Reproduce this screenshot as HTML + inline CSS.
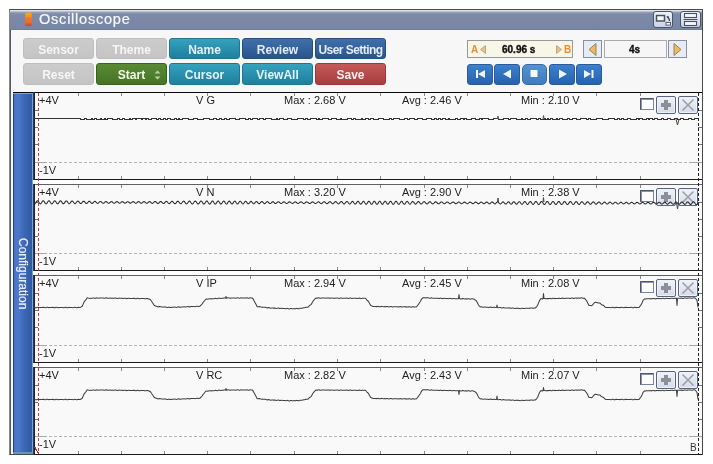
<!DOCTYPE html>
<html><head><meta charset="utf-8"><style>
*{margin:0;padding:0;box-sizing:border-box}
div{will-change:transform}
html,body{width:713px;height:464px;background:#fff;overflow:hidden;position:relative;font-family:'Liberation Sans',sans-serif;}
.frame{position:absolute;left:9px;top:9px;width:694px;height:446px;border:1px solid #4a4a4a;border-left-color:#888;background:#f7f7f7;box-shadow:inset 1px 0 0 #505868}
.title{position:absolute;left:10px;top:10px;width:692px;height:20px;background:linear-gradient(#dfe3ec 0,#dfe3ec 1px,#b8c0d2 1px,#b8c0d2 2px,#95a0b8 2px,#95a0b8 3px,#8592ae 3px,#8592ae 4px,#7d8ba9 4px,#7886a4 19px,#6f7c9a 19px)}
.ttext{position:absolute;left:39px;top:11px;font-size:14px;line-height:16px;letter-spacing:0.72px;color:#f4f6fa;-webkit-text-stroke:0.2px #f4f6fa;transform:scaleX(1.04);transform-origin:0 0;will-change:transform}
.b{position:absolute;border:1px solid;border-radius:3px;font-size:12px;font-weight:bold;text-align:center;line-height:23px;white-space:nowrap;will-change:transform}
.t{position:absolute;font-size:11px;color:#222;line-height:12px;white-space:pre;will-change:transform}
.cb{position:absolute;width:14px;height:12px;border:1px solid #4e5674;border-right-color:#7a84a0;border-bottom-color:#7a84a0;background:#fcfcfc;box-shadow:inset 1px 1px 0 #8a92ac}
.ib{position:absolute;width:20px;height:18px;border:1px solid #5a6480;border-radius:2px;background:linear-gradient(#f0f3f8,#d6dce8);box-shadow:inset 0 0 0 1px #eef2f8}
.side{position:absolute;left:13px;top:93px;width:20px;height:361px;background:linear-gradient(90deg,#22428a 0,#22428a 5%,#4a70c4 5%,#4c7acc 25%,#3e68b8 55%,#2e5a9e 95%,#78a0d4 95%,#78a0d4 100%);box-shadow:inset 0 -2px 0 #6a90c8,inset 0 1px 0 #80a6da}
.side span{position:absolute;left:3px;top:145px;will-change:transform;writing-mode:vertical-rl;font-size:12px;line-height:14px;-webkit-text-stroke:0.2px #e8eef8;color:#e8eef8}
.chart{position:absolute;left:34px;top:92px;width:668px;height:362px;background:#f9f9f9}
.tb{position:absolute;top:11px;height:17px;border:1px solid #4a5468;border-radius:3px;background:linear-gradient(#eef2fa,#c8d2e4)}
</style></head><body>
<div class="frame"></div>
<div class="title"></div>
<svg style="position:absolute;left:24px;top:12px" width="9" height="15" viewBox="0 0 9 15"><defs><linearGradient id="ig" x1="0" y1="0" x2="0" y2="1"><stop offset="0" stop-color="#f2a424"/><stop offset="0.3" stop-color="#f09a22"/><stop offset="0.4" stop-color="#f07a26"/><stop offset="0.75" stop-color="#ec6a28"/><stop offset="1" stop-color="#b84a38"/></linearGradient></defs><rect x="1.2" y="0.3" width="6.6" height="13.6" rx="1.6" fill="url(#ig)"/></svg>
<div class="ttext">Oscilloscope</div>
<div class="tb" style="left:653px;width:20px"><svg style="position:absolute;left:-1px;top:-1px" width="20" height="17" viewBox="0 0 20 17"><rect x="3.5" y="4.5" width="8" height="5.5" fill="#f4f6fa" stroke="#4a5060" stroke-width="1.5"/><path d="M13.5 5 L16 5.5 L14.5 7.5Z" fill="#3a4256"/><path d="M14.8 6 Q16.5 8 16.5 10" stroke="#3a4256" stroke-width="1.2" fill="none"/><rect x="13" y="11.5" width="4.5" height="2.6" fill="#f8faff" stroke="#5a6070" stroke-width="1"/></svg></div>
<div class="tb" style="left:680px;width:21px"><svg style="position:absolute;left:-1px;top:-2px" width="21" height="17" viewBox="0 0 21 17"><rect x="4.5" y="3.5" width="12" height="4" fill="#f4f6fa" stroke="#4a5060" stroke-width="1.1"/><path d="M3.5 9.5 H17.5" stroke="#4a5060" stroke-width="1"/><rect x="4.5" y="11.5" width="12" height="4" fill="#f4f6fa" stroke="#4a5060" stroke-width="1.1"/></svg></div>
<div class="b" style="left:23px;top:38px;width:71px;height:21px;background:linear-gradient(#cccccc,#c4c4c4);border-color:#bebebe;color:#f6f6f6">Sensor</div>
<div class="b" style="left:96px;top:38px;width:71px;height:21px;background:linear-gradient(#cccccc,#c4c4c4);border-color:#bebebe;color:#f6f6f6">Theme</div>
<div class="b" style="left:169px;top:38px;width:71px;height:21px;background:linear-gradient(#36a2be,#2a92b0 45%,#20809c);border-color:#1e7690;color:#e2f2f8">Name</div>
<div class="b" style="left:242px;top:38px;width:71px;height:21px;background:linear-gradient(#416fa6,#3564a0 45%,#2a5488);border-color:#284e80;color:#e4ecf6">Review</div>
<div class="b" style="left:315px;top:38px;width:71px;height:21px;background:linear-gradient(#416fa6,#3564a0 45%,#2a5488);border-color:#284e80;color:#e4ecf6;letter-spacing:-0.55px">User Setting</div>
<div class="b" style="left:23px;top:63px;width:71px;height:22px;background:linear-gradient(#cccccc,#c4c4c4);border-color:#bebebe;color:#f6f6f6">Reset</div>
<div class="b" style="left:96px;top:63px;width:71px;height:22px;background:linear-gradient(#5a8a33,#457524);border-color:#3a621c;color:#f2f8ea">Start<svg style="position:absolute;left:57px;top:6px" width="7" height="10" viewBox="0 0 7 10"><path d="M3.5 0.5 L6.5 3.5 L0.5 3.5Z M0.5 6.5 L6.5 6.5 L3.5 9.5Z" fill="#b9cfa4"/></svg></div>
<div class="b" style="left:169px;top:63px;width:71px;height:22px;background:linear-gradient(#36a2be,#2a92b0 45%,#20809c);border-color:#1e7690;color:#e2f2f8">Cursor</div>
<div class="b" style="left:242px;top:63px;width:71px;height:22px;background:linear-gradient(#36a2be,#2a92b0 45%,#20809c);border-color:#1e7690;color:#e2f2f8">ViewAll</div>
<div class="b" style="left:315px;top:63px;width:71px;height:22px;background:linear-gradient(#c45a5a,#a83d3d);border-color:#9a3838;color:#fbeeee">Save</div>
<div style="position:absolute;left:467px;top:64px;width:26px;height:21px;background:linear-gradient(#3d80cc,#2562b0);border:1px solid #2a5a9a;border-radius:3px"><svg style="position:absolute;left:-1px;top:-2px" width="26" height="22" viewBox="0 0 26 22"><rect x="9" y="7" width="2" height="8" fill="#eef6ff"/><path d="M11 11 L18 7 L18 15 Z" fill="#eef6ff"/></svg></div>
<div style="position:absolute;left:494px;top:64px;width:26px;height:21px;background:linear-gradient(#3d80cc,#2562b0);border:1px solid #2a5a9a;border-radius:3px"><svg style="position:absolute;left:-1px;top:-2px" width="26" height="22" viewBox="0 0 26 22"><path d="M9 11 L17 6.5 L17 15.5 Z" fill="#eef6ff"/></svg></div>
<div style="position:absolute;left:522px;top:64px;width:25px;height:21px;background:linear-gradient(#5592cf,#3f7bbf);border:1px solid #3a6aa0;border-radius:5px"><svg style="position:absolute;left:-1px;top:-2px" width="25" height="22" viewBox="0 0 25 22"><rect x="8.5" y="7" width="7" height="7" fill="#f4f8ff"/></svg></div>
<div style="position:absolute;left:549px;top:64px;width:26px;height:21px;background:linear-gradient(#3d80cc,#2562b0);border:1px solid #2a5a9a;border-radius:3px"><svg style="position:absolute;left:-1px;top:-2px" width="26" height="22" viewBox="0 0 26 22"><path d="M10 6.5 L18 11 L10 15.5 Z" fill="#eef6ff"/></svg></div>
<div style="position:absolute;left:576px;top:64px;width:26px;height:21px;background:linear-gradient(#3d80cc,#2562b0);border:1px solid #2a5a9a;border-radius:3px"><svg style="position:absolute;left:-1px;top:-2px" width="26" height="22" viewBox="0 0 26 22"><path d="M8 7 L15 11 L8 15 Z" fill="#eef6ff"/><rect x="15.5" y="7" width="2" height="8" fill="#eef6ff"/></svg></div>
<div style="position:absolute;left:467px;top:40px;width:106px;height:18px;border:1px solid #999;background:#f8f6e6"></div>
<div style="position:absolute;left:471px;top:44px;font-size:10px;line-height:11px;font-weight:bold;color:#f08a30;font-family:'Liberation Sans',sans-serif;">A</div>
<svg style="position:absolute;left:480px;top:45px" width="6" height="9" viewBox="0 0 6 9"><path d="M5.5 0.5 L0.5 4.5 L5.5 8.5Z" fill="#f0c080" stroke="#a0a080" stroke-width="0.8"/></svg>
<div style="position:absolute;left:502px;top:44px;font-size:10px;font-weight:bold;color:#111;-webkit-text-stroke:0.35px #111;font-family:'Liberation Sans',sans-serif;">60.96 s</div>
<svg style="position:absolute;left:556px;top:45px" width="6" height="9" viewBox="0 0 6 9"><path d="M0.5 0.5 L5.5 4.5 L0.5 8.5Z" fill="#f0c080" stroke="#a0a080" stroke-width="0.8"/></svg>
<div style="position:absolute;left:564px;top:44px;font-size:10px;line-height:11px;font-weight:bold;color:#f08a30;font-family:'Liberation Sans',sans-serif;">B</div>
<div style="position:absolute;left:583px;top:40px;width:19px;height:18px;border:1px solid #8890a0;background:#e6ecf6"></div>
<svg style="position:absolute;left:588px;top:43px" width="9" height="13" viewBox="0 0 9 13"><path d="M8 0.5 L1 6.5 L8 12.5Z" fill="#f2b860" stroke="#8a7a50" stroke-width="0.9"/></svg>
<div style="position:absolute;left:604px;top:40px;width:63px;height:18px;border:1px solid #aaa;background:#f6f6f6"></div>
<div style="position:absolute;left:603px;top:44px;width:63px;text-align:center;font-size:10px;font-weight:bold;color:#111;-webkit-text-stroke:0.35px #111;font-family:'Liberation Sans',sans-serif;">4s</div>
<div style="position:absolute;left:668px;top:40px;width:19px;height:18px;border:1px solid #8890a0;background:#e6ecf6"></div>
<svg style="position:absolute;left:673px;top:43px" width="9" height="13" viewBox="0 0 9 13"><path d="M1 0.5 L8 6.5 L1 12.5Z" fill="#f2b860" stroke="#8a7a50" stroke-width="0.9"/></svg>
<div class="side"><span>Configuration</span></div>
<div class="chart"></div>
<svg style="position:absolute;left:0;top:0" width="713" height="464" shape-rendering="crispEdges"><line x1="13" y1="92.5" x2="702" y2="92.5" stroke="#080808" stroke-width="1"/><line x1="33" y1="179.5" x2="702" y2="179.5" stroke="#1a1a1a" stroke-width="1"/><line x1="78.5" y1="93" x2="78.5" y2="96" stroke="#888" stroke-width="1"/><line x1="78.5" y1="176" x2="78.5" y2="179" stroke="#888" stroke-width="1"/><line x1="121.5" y1="93" x2="121.5" y2="96" stroke="#888" stroke-width="1"/><line x1="121.5" y1="176" x2="121.5" y2="179" stroke="#888" stroke-width="1"/><line x1="164.5" y1="93" x2="164.5" y2="96" stroke="#888" stroke-width="1"/><line x1="164.5" y1="176" x2="164.5" y2="179" stroke="#888" stroke-width="1"/><line x1="207.5" y1="93" x2="207.5" y2="96" stroke="#888" stroke-width="1"/><line x1="207.5" y1="176" x2="207.5" y2="179" stroke="#888" stroke-width="1"/><line x1="250.5" y1="93" x2="250.5" y2="96" stroke="#888" stroke-width="1"/><line x1="250.5" y1="176" x2="250.5" y2="179" stroke="#888" stroke-width="1"/><line x1="294.5" y1="93" x2="294.5" y2="96" stroke="#888" stroke-width="1"/><line x1="294.5" y1="176" x2="294.5" y2="179" stroke="#888" stroke-width="1"/><line x1="337.5" y1="93" x2="337.5" y2="96" stroke="#888" stroke-width="1"/><line x1="337.5" y1="176" x2="337.5" y2="179" stroke="#888" stroke-width="1"/><line x1="380.5" y1="93" x2="380.5" y2="96" stroke="#888" stroke-width="1"/><line x1="380.5" y1="176" x2="380.5" y2="179" stroke="#888" stroke-width="1"/><line x1="424.5" y1="93" x2="424.5" y2="96" stroke="#888" stroke-width="1"/><line x1="424.5" y1="176" x2="424.5" y2="179" stroke="#888" stroke-width="1"/><line x1="467.5" y1="93" x2="467.5" y2="96" stroke="#888" stroke-width="1"/><line x1="467.5" y1="176" x2="467.5" y2="179" stroke="#888" stroke-width="1"/><line x1="510.5" y1="93" x2="510.5" y2="96" stroke="#888" stroke-width="1"/><line x1="510.5" y1="176" x2="510.5" y2="179" stroke="#888" stroke-width="1"/><line x1="553.5" y1="93" x2="553.5" y2="96" stroke="#888" stroke-width="1"/><line x1="553.5" y1="176" x2="553.5" y2="179" stroke="#888" stroke-width="1"/><line x1="596.5" y1="93" x2="596.5" y2="96" stroke="#888" stroke-width="1"/><line x1="596.5" y1="176" x2="596.5" y2="179" stroke="#888" stroke-width="1"/><line x1="640.5" y1="93" x2="640.5" y2="96" stroke="#888" stroke-width="1"/><line x1="640.5" y1="176" x2="640.5" y2="179" stroke="#888" stroke-width="1"/><line x1="34" y1="110.5" x2="38" y2="110.5" stroke="#777" stroke-width="1"/><line x1="34" y1="127.5" x2="38" y2="127.5" stroke="#777" stroke-width="1"/><line x1="34" y1="144.5" x2="38" y2="144.5" stroke="#777" stroke-width="1"/><line x1="698" y1="110.5" x2="702" y2="110.5" stroke="#777" stroke-width="1"/><line x1="698" y1="127.5" x2="702" y2="127.5" stroke="#777" stroke-width="1"/><line x1="698" y1="144.5" x2="702" y2="144.5" stroke="#777" stroke-width="1"/><line x1="34" y1="162.5" x2="47" y2="162.5" stroke="#a8a8a8" stroke-width="1"/><line x1="49" y1="162.5" x2="688" y2="162.5" stroke="#b4b4b4" stroke-width="1" stroke-dasharray="3,2"/><line x1="689" y1="162.5" x2="702" y2="162.5" stroke="#a8a8a8" stroke-width="1"/><line x1="33" y1="184.5" x2="702" y2="184.5" stroke="#606060" stroke-width="1"/><line x1="33" y1="270.5" x2="702" y2="270.5" stroke="#1a1a1a" stroke-width="1"/><line x1="78.5" y1="185" x2="78.5" y2="188" stroke="#888" stroke-width="1"/><line x1="78.5" y1="267" x2="78.5" y2="270" stroke="#888" stroke-width="1"/><line x1="121.5" y1="185" x2="121.5" y2="188" stroke="#888" stroke-width="1"/><line x1="121.5" y1="267" x2="121.5" y2="270" stroke="#888" stroke-width="1"/><line x1="164.5" y1="185" x2="164.5" y2="188" stroke="#888" stroke-width="1"/><line x1="164.5" y1="267" x2="164.5" y2="270" stroke="#888" stroke-width="1"/><line x1="207.5" y1="185" x2="207.5" y2="188" stroke="#888" stroke-width="1"/><line x1="207.5" y1="267" x2="207.5" y2="270" stroke="#888" stroke-width="1"/><line x1="250.5" y1="185" x2="250.5" y2="188" stroke="#888" stroke-width="1"/><line x1="250.5" y1="267" x2="250.5" y2="270" stroke="#888" stroke-width="1"/><line x1="294.5" y1="185" x2="294.5" y2="188" stroke="#888" stroke-width="1"/><line x1="294.5" y1="267" x2="294.5" y2="270" stroke="#888" stroke-width="1"/><line x1="337.5" y1="185" x2="337.5" y2="188" stroke="#888" stroke-width="1"/><line x1="337.5" y1="267" x2="337.5" y2="270" stroke="#888" stroke-width="1"/><line x1="380.5" y1="185" x2="380.5" y2="188" stroke="#888" stroke-width="1"/><line x1="380.5" y1="267" x2="380.5" y2="270" stroke="#888" stroke-width="1"/><line x1="424.5" y1="185" x2="424.5" y2="188" stroke="#888" stroke-width="1"/><line x1="424.5" y1="267" x2="424.5" y2="270" stroke="#888" stroke-width="1"/><line x1="467.5" y1="185" x2="467.5" y2="188" stroke="#888" stroke-width="1"/><line x1="467.5" y1="267" x2="467.5" y2="270" stroke="#888" stroke-width="1"/><line x1="510.5" y1="185" x2="510.5" y2="188" stroke="#888" stroke-width="1"/><line x1="510.5" y1="267" x2="510.5" y2="270" stroke="#888" stroke-width="1"/><line x1="553.5" y1="185" x2="553.5" y2="188" stroke="#888" stroke-width="1"/><line x1="553.5" y1="267" x2="553.5" y2="270" stroke="#888" stroke-width="1"/><line x1="596.5" y1="185" x2="596.5" y2="188" stroke="#888" stroke-width="1"/><line x1="596.5" y1="267" x2="596.5" y2="270" stroke="#888" stroke-width="1"/><line x1="640.5" y1="185" x2="640.5" y2="188" stroke="#888" stroke-width="1"/><line x1="640.5" y1="267" x2="640.5" y2="270" stroke="#888" stroke-width="1"/><line x1="34" y1="202.5" x2="38" y2="202.5" stroke="#777" stroke-width="1"/><line x1="34" y1="219.5" x2="38" y2="219.5" stroke="#777" stroke-width="1"/><line x1="34" y1="236.5" x2="38" y2="236.5" stroke="#777" stroke-width="1"/><line x1="698" y1="202.5" x2="702" y2="202.5" stroke="#777" stroke-width="1"/><line x1="698" y1="219.5" x2="702" y2="219.5" stroke="#777" stroke-width="1"/><line x1="698" y1="236.5" x2="702" y2="236.5" stroke="#777" stroke-width="1"/><line x1="34" y1="253.5" x2="47" y2="253.5" stroke="#a8a8a8" stroke-width="1"/><line x1="49" y1="253.5" x2="688" y2="253.5" stroke="#b4b4b4" stroke-width="1" stroke-dasharray="3,2"/><line x1="689" y1="253.5" x2="702" y2="253.5" stroke="#a8a8a8" stroke-width="1"/><line x1="33" y1="275.5" x2="702" y2="275.5" stroke="#606060" stroke-width="1"/><line x1="33" y1="362.5" x2="702" y2="362.5" stroke="#1a1a1a" stroke-width="1"/><line x1="78.5" y1="276" x2="78.5" y2="279" stroke="#888" stroke-width="1"/><line x1="78.5" y1="359" x2="78.5" y2="362" stroke="#888" stroke-width="1"/><line x1="121.5" y1="276" x2="121.5" y2="279" stroke="#888" stroke-width="1"/><line x1="121.5" y1="359" x2="121.5" y2="362" stroke="#888" stroke-width="1"/><line x1="164.5" y1="276" x2="164.5" y2="279" stroke="#888" stroke-width="1"/><line x1="164.5" y1="359" x2="164.5" y2="362" stroke="#888" stroke-width="1"/><line x1="207.5" y1="276" x2="207.5" y2="279" stroke="#888" stroke-width="1"/><line x1="207.5" y1="359" x2="207.5" y2="362" stroke="#888" stroke-width="1"/><line x1="250.5" y1="276" x2="250.5" y2="279" stroke="#888" stroke-width="1"/><line x1="250.5" y1="359" x2="250.5" y2="362" stroke="#888" stroke-width="1"/><line x1="294.5" y1="276" x2="294.5" y2="279" stroke="#888" stroke-width="1"/><line x1="294.5" y1="359" x2="294.5" y2="362" stroke="#888" stroke-width="1"/><line x1="337.5" y1="276" x2="337.5" y2="279" stroke="#888" stroke-width="1"/><line x1="337.5" y1="359" x2="337.5" y2="362" stroke="#888" stroke-width="1"/><line x1="380.5" y1="276" x2="380.5" y2="279" stroke="#888" stroke-width="1"/><line x1="380.5" y1="359" x2="380.5" y2="362" stroke="#888" stroke-width="1"/><line x1="424.5" y1="276" x2="424.5" y2="279" stroke="#888" stroke-width="1"/><line x1="424.5" y1="359" x2="424.5" y2="362" stroke="#888" stroke-width="1"/><line x1="467.5" y1="276" x2="467.5" y2="279" stroke="#888" stroke-width="1"/><line x1="467.5" y1="359" x2="467.5" y2="362" stroke="#888" stroke-width="1"/><line x1="510.5" y1="276" x2="510.5" y2="279" stroke="#888" stroke-width="1"/><line x1="510.5" y1="359" x2="510.5" y2="362" stroke="#888" stroke-width="1"/><line x1="553.5" y1="276" x2="553.5" y2="279" stroke="#888" stroke-width="1"/><line x1="553.5" y1="359" x2="553.5" y2="362" stroke="#888" stroke-width="1"/><line x1="596.5" y1="276" x2="596.5" y2="279" stroke="#888" stroke-width="1"/><line x1="596.5" y1="359" x2="596.5" y2="362" stroke="#888" stroke-width="1"/><line x1="640.5" y1="276" x2="640.5" y2="279" stroke="#888" stroke-width="1"/><line x1="640.5" y1="359" x2="640.5" y2="362" stroke="#888" stroke-width="1"/><line x1="34" y1="293.5" x2="38" y2="293.5" stroke="#777" stroke-width="1"/><line x1="34" y1="310.5" x2="38" y2="310.5" stroke="#777" stroke-width="1"/><line x1="34" y1="327.5" x2="38" y2="327.5" stroke="#777" stroke-width="1"/><line x1="698" y1="293.5" x2="702" y2="293.5" stroke="#777" stroke-width="1"/><line x1="698" y1="310.5" x2="702" y2="310.5" stroke="#777" stroke-width="1"/><line x1="698" y1="327.5" x2="702" y2="327.5" stroke="#777" stroke-width="1"/><line x1="34" y1="345.5" x2="47" y2="345.5" stroke="#a8a8a8" stroke-width="1"/><line x1="49" y1="345.5" x2="688" y2="345.5" stroke="#b4b4b4" stroke-width="1" stroke-dasharray="3,2"/><line x1="689" y1="345.5" x2="702" y2="345.5" stroke="#a8a8a8" stroke-width="1"/><line x1="33" y1="367.5" x2="702" y2="367.5" stroke="#606060" stroke-width="1"/><line x1="33" y1="454.5" x2="702" y2="454.5" stroke="#1a1a1a" stroke-width="1"/><line x1="78.5" y1="368" x2="78.5" y2="371" stroke="#888" stroke-width="1"/><line x1="78.5" y1="451" x2="78.5" y2="454" stroke="#888" stroke-width="1"/><line x1="121.5" y1="368" x2="121.5" y2="371" stroke="#888" stroke-width="1"/><line x1="121.5" y1="451" x2="121.5" y2="454" stroke="#888" stroke-width="1"/><line x1="164.5" y1="368" x2="164.5" y2="371" stroke="#888" stroke-width="1"/><line x1="164.5" y1="451" x2="164.5" y2="454" stroke="#888" stroke-width="1"/><line x1="207.5" y1="368" x2="207.5" y2="371" stroke="#888" stroke-width="1"/><line x1="207.5" y1="451" x2="207.5" y2="454" stroke="#888" stroke-width="1"/><line x1="250.5" y1="368" x2="250.5" y2="371" stroke="#888" stroke-width="1"/><line x1="250.5" y1="451" x2="250.5" y2="454" stroke="#888" stroke-width="1"/><line x1="294.5" y1="368" x2="294.5" y2="371" stroke="#888" stroke-width="1"/><line x1="294.5" y1="451" x2="294.5" y2="454" stroke="#888" stroke-width="1"/><line x1="337.5" y1="368" x2="337.5" y2="371" stroke="#888" stroke-width="1"/><line x1="337.5" y1="451" x2="337.5" y2="454" stroke="#888" stroke-width="1"/><line x1="380.5" y1="368" x2="380.5" y2="371" stroke="#888" stroke-width="1"/><line x1="380.5" y1="451" x2="380.5" y2="454" stroke="#888" stroke-width="1"/><line x1="424.5" y1="368" x2="424.5" y2="371" stroke="#888" stroke-width="1"/><line x1="424.5" y1="451" x2="424.5" y2="454" stroke="#888" stroke-width="1"/><line x1="467.5" y1="368" x2="467.5" y2="371" stroke="#888" stroke-width="1"/><line x1="467.5" y1="451" x2="467.5" y2="454" stroke="#888" stroke-width="1"/><line x1="510.5" y1="368" x2="510.5" y2="371" stroke="#888" stroke-width="1"/><line x1="510.5" y1="451" x2="510.5" y2="454" stroke="#888" stroke-width="1"/><line x1="553.5" y1="368" x2="553.5" y2="371" stroke="#888" stroke-width="1"/><line x1="553.5" y1="451" x2="553.5" y2="454" stroke="#888" stroke-width="1"/><line x1="596.5" y1="368" x2="596.5" y2="371" stroke="#888" stroke-width="1"/><line x1="596.5" y1="451" x2="596.5" y2="454" stroke="#888" stroke-width="1"/><line x1="640.5" y1="368" x2="640.5" y2="371" stroke="#888" stroke-width="1"/><line x1="640.5" y1="451" x2="640.5" y2="454" stroke="#888" stroke-width="1"/><line x1="34" y1="385.5" x2="38" y2="385.5" stroke="#777" stroke-width="1"/><line x1="34" y1="402.5" x2="38" y2="402.5" stroke="#777" stroke-width="1"/><line x1="34" y1="419.5" x2="38" y2="419.5" stroke="#777" stroke-width="1"/><line x1="698" y1="385.5" x2="702" y2="385.5" stroke="#777" stroke-width="1"/><line x1="698" y1="402.5" x2="702" y2="402.5" stroke="#777" stroke-width="1"/><line x1="698" y1="419.5" x2="702" y2="419.5" stroke="#777" stroke-width="1"/><line x1="34" y1="436.5" x2="47" y2="436.5" stroke="#a8a8a8" stroke-width="1"/><line x1="49" y1="436.5" x2="688" y2="436.5" stroke="#b4b4b4" stroke-width="1" stroke-dasharray="3,2"/><line x1="689" y1="436.5" x2="702" y2="436.5" stroke="#a8a8a8" stroke-width="1"/><line x1="33.5" y1="92" x2="33.5" y2="455" stroke="#2a3a58" stroke-width="1"/><line x1="34.5" y1="92" x2="34.5" y2="455" stroke="#222" stroke-width="1"/><rect x="33" y="180" width="669" height="4" fill="#ffffff"/><rect x="33" y="271" width="669" height="4" fill="#ffffff"/><rect x="33" y="363" width="669" height="4" fill="#ffffff"/><line x1="38.5" y1="93" x2="38.5" y2="454" stroke="#b84050" stroke-width="1" stroke-dasharray="3,2"/><line x1="698.5" y1="93" x2="698.5" y2="454" stroke="#222" stroke-width="1" stroke-dasharray="3,2"/><path d="M34.5 447 L38.5 453.5" stroke="#a03030" stroke-width="1.2"/></svg>
<div class="t" style="left:39px;top:94px">+4V</div>
<div class="t" style="left:39px;top:164px">-1V</div>
<div class="t" style="left:196px;top:94px">V G</div>
<div class="t" style="left:284px;top:94px">Max : 2.68 V</div>
<div class="t" style="left:402px;top:94px">Avg : 2.46 V</div>
<div class="t" style="left:521px;top:94px">Min : 2.10 V</div>
<div class="cb" style="left:640px;top:98px"></div>
<div class="ib" style="left:656px;top:96px"><svg style="position:absolute;left:-1px;top:-1px" width="20" height="18" viewBox="0 0 20 18"><path d="M8 4h4v3h3v4h-3v3h-4v-3h-3v-4h3z" fill="#8a909a"/></svg></div>
<div class="ib" style="left:678px;top:96px"><svg style="position:absolute;left:-1px;top:-1px" width="20" height="18" viewBox="0 0 20 18"><path d="M4.5 3.5L15.5 14.5M15.5 3.5L4.5 14.5" stroke="#9aa0aa" stroke-width="1.6"/></svg></div>
<div class="t" style="left:39px;top:186px">+4V</div>
<div class="t" style="left:39px;top:255px">-1V</div>
<div class="t" style="left:196px;top:186px">V N</div>
<div class="t" style="left:284px;top:186px">Max : 3.20 V</div>
<div class="t" style="left:402px;top:186px">Avg : 2.90 V</div>
<div class="t" style="left:521px;top:186px">Min : 2.38 V</div>
<div class="cb" style="left:640px;top:190px"></div>
<div class="ib" style="left:656px;top:188px"><svg style="position:absolute;left:-1px;top:-1px" width="20" height="18" viewBox="0 0 20 18"><path d="M8 4h4v3h3v4h-3v3h-4v-3h-3v-4h3z" fill="#8a909a"/></svg></div>
<div class="ib" style="left:678px;top:188px"><svg style="position:absolute;left:-1px;top:-1px" width="20" height="18" viewBox="0 0 20 18"><path d="M4.5 3.5L15.5 14.5M15.5 3.5L4.5 14.5" stroke="#9aa0aa" stroke-width="1.6"/></svg></div>
<div class="t" style="left:39px;top:277px">+4V</div>
<div class="t" style="left:39px;top:347px">-1V</div>
<div class="t" style="left:196px;top:277px">V IP</div>
<div class="t" style="left:284px;top:277px">Max : 2.94 V</div>
<div class="t" style="left:402px;top:277px">Avg : 2.45 V</div>
<div class="t" style="left:521px;top:277px">Min : 2.08 V</div>
<div class="cb" style="left:640px;top:281px"></div>
<div class="ib" style="left:656px;top:279px"><svg style="position:absolute;left:-1px;top:-1px" width="20" height="18" viewBox="0 0 20 18"><path d="M8 4h4v3h3v4h-3v3h-4v-3h-3v-4h3z" fill="#8a909a"/></svg></div>
<div class="ib" style="left:678px;top:279px"><svg style="position:absolute;left:-1px;top:-1px" width="20" height="18" viewBox="0 0 20 18"><path d="M4.5 3.5L15.5 14.5M15.5 3.5L4.5 14.5" stroke="#9aa0aa" stroke-width="1.6"/></svg></div>
<div class="t" style="left:39px;top:369px">+4V</div>
<div class="t" style="left:39px;top:438px">-1V</div>
<div class="t" style="left:196px;top:369px">V RC</div>
<div class="t" style="left:284px;top:369px">Max : 2.82 V</div>
<div class="t" style="left:402px;top:369px">Avg : 2.43 V</div>
<div class="t" style="left:521px;top:369px">Min : 2.07 V</div>
<div class="cb" style="left:640px;top:373px"></div>
<div class="ib" style="left:656px;top:371px"><svg style="position:absolute;left:-1px;top:-1px" width="20" height="18" viewBox="0 0 20 18"><path d="M8 4h4v3h3v4h-3v3h-4v-3h-3v-4h3z" fill="#8a909a"/></svg></div>
<div class="ib" style="left:678px;top:371px"><svg style="position:absolute;left:-1px;top:-1px" width="20" height="18" viewBox="0 0 20 18"><path d="M4.5 3.5L15.5 14.5M15.5 3.5L4.5 14.5" stroke="#9aa0aa" stroke-width="1.6"/></svg></div>
<div class="t" style="left:690px;top:442px;font-size:10px;color:#333">B</div>
<svg style="position:absolute;left:0;top:0" width="713" height="464"><path d="M34 118.5 H80 V119.5 H84 V118.5 H86 V119.5 H91 V118.5 H92 V119.5 H94 V118.5 H96 V119.5 H100 V118.5 H101 V119.5 H104 V118.5 H105 V119.5 H107 V118.5 H112 V119.5 H117 V118.5 H119 V119.5 H122 V118.5 H124 V119.5 H129 V118.5 H130 V119.5 H132 V118.5 H135 V119.5 H136 V118.5 H141 V119.5 H142 V118.5 H145 V119.5 H146 V118.5 H148 V119.5 H151 V118.5 H156 V119.5 H158 V118.5 H160 V119.5 H163 V118.5 H165 V119.5 H167 V118.5 H170 V119.5 H174 V118.5 H176 V119.5 H178 V118.5 H179 V119.5 H182 V118.5 H188 V119.5 H193 V118.5 H197 V119.5 H203 V118.5 H209 V119.5 H213 V118.5 H216 V119.5 H219 V118.5 H221 V119.5 H224 V118.5 H226 V119.5 H229 V118.5 H235 V119.5 H239 V118.5 H245 V119.5 H248 V118.5 H250 V119.5 H252 V118.5 H257 V119.5 H259 V118.5 H263 V119.5 H265 V118.5 H271 V119.5 H276 V118.5 H277 V119.5 H279 V118.5 H283 V119.5 H287 V118.5 H291 V119.5 H297 V118.5 H303 V119.5 H305 V118.5 H307 V119.5 H310 V118.5 H316 V119.5 H318 V118.5 H319 V119.5 H322 V118.5 H328 V119.5 H331 V118.5 H336 V119.5 H340 V118.5 H341 V119.5 H347 V118.5 H351 V119.5 H353 V118.5 H355 V119.5 H361 V118.5 H362 V119.5 H365 V118.5 H368 V119.5 H370 V118.5 H373 V119.5 H378 V118.5 H383 V119.5 H389 V118.5 H391 V119.5 H393 V118.5 H399 V119.5 H404 V118.5 H407 V119.5 H409 V118.5 H414 V119.5 H417 V118.5 H422 V119.5 H426 V118.5 H431 V119.5 H434 V118.5 H436 V119.5 H438 V118.5 H440 V119.5 H442 V118.5 H445 V119.5 H448 V118.5 H449 V119.5 H455 V118.5 H457 V119.5 H460 V118.5 H463 V119.5 H464 V118.5 H466 V119.5 H471 V118.5 H475 V119.5 H479 V118.5 H481 V119.5 H482 V118.5 H488 V119.5 H493 V118.5 H498 V119.5 H503 V118.5 H508 V119.5 H510 V118.5 H516 V119.5 H521 V118.5 H522 V119.5 H525 V118.5 H527 V119.5 H530 V118.5 H536 V119.5 H538 V118.5 H540 V119.5 H544 V118.5 H545 V119.5 H547 V118.5 H548 V119.5 H550 V118.5 H552 V119.5 H556 V118.5 H557 V119.5 H559 V118.5 H562 V119.5 H567 V118.5 H569 V119.5 H572 V118.5 H576 V119.5 H580 V118.5 H586 V119.5 H588 V118.5 H590 V119.5 H596 V118.5 H602 V119.5 H608 V118.5 H614 V119.5 H617 V118.5 H619 V119.5 H621 V118.5 H623 V119.5 H627 V118.5 H630 V119.5 H636 V118.5 H638 V119.5 H639 V118.5 H642 V119.5 H646 V118.5 H648 V119.5 H649 V118.5 H652 V119.5 H654 V118.5 H657 V119.5 H661 V118.5 H663 V119.5 H667 V118.5 H670 V119.5 H674 V118.5 H677 V119.5 H680 V118.5 H683 V119.5 H688 V118.5 H691 V119.5 H694 V118.5 H698" fill="none" stroke="#333" stroke-width="1" shape-rendering="crispEdges"/><path d="M497.5 119 L498 116 L498.5 119 M543 119 L543.5 115.5 L544 119" fill="none" stroke="#555" stroke-width="1"/><path d="M676 119 L677.5 125 L679 119.5" fill="none" stroke="#444" stroke-width="1"/><polyline points="34.00,203.43 34.50,203.85 35.00,203.80 35.50,203.29 36.00,202.49 36.50,201.63 37.00,200.97 37.50,200.71 38.00,200.93 38.50,201.56 39.00,202.42 39.50,203.24 40.00,203.78 40.50,203.89 41.00,203.52 41.50,202.80 42.00,201.93 42.50,201.17 43.00,200.75 43.50,200.80 44.00,201.28 44.50,202.07 45.00,202.93 45.50,203.61 46.00,203.91 46.50,203.74 47.00,203.15 47.50,202.33 48.00,201.50 48.50,200.91 49.00,200.74 49.50,201.02 50.00,201.68 50.50,202.52 51.00,203.30 51.50,203.80 52.00,203.87 52.50,203.50 53.00,202.78 53.50,201.94 54.00,201.22 54.50,200.81 55.00,200.84 55.50,201.30 56.00,202.05 56.50,202.88 57.00,203.54 57.50,203.86 58.00,203.74 58.50,203.21 59.00,202.44 59.50,201.65 60.00,201.05 60.50,200.82 61.00,201.03 61.50,201.61 62.00,202.39 62.50,203.15 63.00,203.68 63.50,203.82 64.00,203.54 64.50,202.92 65.00,202.14 65.50,201.42 66.00,200.97 66.50,200.92 67.00,201.27 67.50,201.92 68.00,202.69 68.50,203.36 69.00,203.73 69.50,203.70 70.00,203.29 70.50,202.61 71.00,201.86 71.50,201.26 72.00,200.98 72.50,201.09 73.00,201.56 73.50,202.26 74.00,202.97 74.50,203.50 75.00,203.70 75.50,203.51 76.00,202.98 76.50,202.28 77.00,201.61 77.50,201.17 78.00,201.07 78.50,201.35 79.00,201.91 79.50,202.61 80.00,203.22 80.50,203.58 81.00,203.58 81.50,203.22 82.00,202.62 82.50,201.95 83.00,201.41 83.50,201.16 84.00,201.26 84.50,201.69 85.00,202.32 85.50,202.95 86.00,203.40 86.50,203.55 87.00,203.34 87.50,202.84 88.00,202.22 88.50,201.64 89.00,201.29 89.50,201.27 90.00,201.58 90.50,202.13 91.00,202.74 91.50,203.24 92.00,203.47 92.50,203.37 93.00,202.97 93.50,202.40 94.00,201.83 94.50,201.43 95.00,201.33 95.50,201.56 96.00,202.03 96.50,202.61 97.00,203.11 97.50,203.38 98.00,203.34 98.50,203.01 99.00,202.49 99.50,201.95 100.00,201.54 100.50,201.41 101.00,201.58 101.50,202.00 102.00,202.54 102.50,203.03 103.00,203.31 103.50,203.30 104.00,203.01 104.50,202.52 105.00,202.00 105.50,201.62 106.00,201.48 106.50,201.63 107.00,202.03 107.50,202.54 108.00,203.00 108.50,203.26 109.00,203.25 109.50,202.97 110.00,202.50 110.50,202.02 111.00,201.66 111.50,201.54 112.00,201.70 112.50,202.09 113.00,202.58 113.50,203.00 114.00,203.24 114.50,203.20 115.00,202.91 115.50,202.45 116.00,201.99 116.50,201.67 117.00,201.59 117.50,201.78 118.00,202.17 118.50,202.64 119.00,203.04 119.50,203.23 120.00,203.15 120.50,202.84 121.00,202.39 121.50,201.95 122.00,201.67 122.50,201.63 123.00,201.85 123.50,202.26 124.00,202.72 124.50,203.08 125.00,203.22 125.50,203.10 126.00,202.76 126.50,202.31 127.00,201.89 127.50,201.65 128.00,201.67 128.50,201.93 129.00,202.36 129.50,202.81 130.00,203.13 130.50,203.23 131.00,203.07 131.50,202.69 132.00,202.23 132.50,201.84 133.00,201.64 133.50,201.69 134.00,201.99 134.50,202.44 135.00,202.89 135.50,203.19 136.00,203.25 136.50,203.04 137.00,202.64 137.50,202.17 138.00,201.78 138.50,201.61 139.00,201.71 139.50,202.04 140.00,202.51 140.50,202.96 141.00,203.25 141.50,203.28 142.00,203.04 142.50,202.61 143.00,202.12 143.50,201.74 144.00,201.58 144.50,201.69 145.00,202.06 145.50,202.55 146.00,203.01 146.50,203.30 147.00,203.33 147.50,203.07 148.00,202.62 148.50,202.11 149.00,201.70 149.50,201.53 150.00,201.65 150.50,202.03 151.00,202.54 151.50,203.04 152.00,203.36 152.50,203.40 153.00,203.15 153.50,202.68 154.00,202.13 154.50,201.69 155.00,201.48 155.50,201.57 156.00,201.94 156.50,202.48 157.00,203.02 157.50,203.40 158.00,203.49 158.50,203.27 159.00,202.80 159.50,202.23 160.00,201.72 160.50,201.43 161.00,201.46 161.50,201.80 162.00,202.34 162.50,202.93 163.00,203.39 163.50,203.58 164.00,203.44 164.50,203.00 165.00,202.40 165.50,201.82 166.00,201.43 166.50,201.34 167.00,201.60 167.50,202.12 168.00,202.75 168.50,203.32 169.00,203.64 169.50,203.62 170.00,203.27 170.50,202.68 171.00,202.02 171.50,201.50 172.00,201.26 172.50,201.38 173.00,201.82 173.50,202.47 174.00,203.13 174.50,203.61 175.00,203.77 175.50,203.55 176.00,203.03 176.50,202.34 177.00,201.69 177.50,201.27 178.00,201.20 178.50,201.50 179.00,202.09 179.50,202.81 180.00,203.44 180.50,203.81 181.00,203.80 181.50,203.42 182.00,202.76 182.50,202.03 183.00,201.42 183.50,201.12 184.00,201.21 184.50,201.68 185.00,202.38 185.50,203.13 186.00,203.70 186.50,203.94 187.00,203.76 187.50,203.23 188.00,202.48 188.50,201.74 189.00,201.21 189.50,201.05 190.00,201.31 190.50,201.91 191.00,202.70 191.50,203.43 192.00,203.91 192.50,203.99 193.00,203.65 193.50,202.98 194.00,202.17 194.50,201.46 195.00,201.05 195.50,201.06 196.00,201.49 196.50,202.22 197.00,203.04 197.50,203.72 198.00,204.05 198.50,203.95 199.00,203.43 199.50,202.65 200.00,201.83 200.50,201.21 201.00,200.96 201.50,201.17 202.00,201.77 202.50,202.60 203.00,203.41 203.50,203.96 204.00,204.10 204.50,203.78 205.00,203.10 205.50,202.24 206.00,201.47 206.50,201.01 207.00,201.00 207.50,201.43 208.00,202.20 208.50,203.06 209.00,203.78 209.50,204.12 210.00,204.00 210.50,203.44 211.00,202.62 211.50,201.77 212.00,201.15 212.50,200.94 213.00,201.22 213.50,201.89 214.00,202.75 214.50,203.56 215.00,204.06 215.50,204.10 216.00,203.67 216.50,202.91 217.00,202.03 217.50,201.31 218.00,200.97 218.50,201.11 219.00,201.69 219.50,202.53 220.00,203.38 220.50,203.97 221.00,204.13 221.50,203.80 222.00,203.09 222.50,202.22 223.00,201.45 223.50,201.03 224.00,201.08 224.50,201.59 225.00,202.40 225.50,203.26 226.00,203.89 226.50,204.11 227.00,203.84 227.50,203.17 228.00,202.32 228.50,201.54 229.00,201.09 229.50,201.11 230.00,201.59 230.50,202.37 231.00,203.21 231.50,203.84 232.00,204.07 232.50,203.81 233.00,203.16 233.50,202.33 234.00,201.58 234.50,201.15 235.00,201.18 235.50,201.65 236.00,202.42 236.50,203.23 237.00,203.82 237.50,204.01 238.00,203.74 238.50,203.09 239.00,202.28 239.50,201.58 240.00,201.20 240.50,201.28 241.00,201.77 241.50,202.52 242.00,203.29 242.50,203.82 243.00,203.94 243.50,203.62 244.00,202.97 244.50,202.20 245.00,201.56 245.50,201.26 246.00,201.40 246.50,201.92 247.00,202.66 247.50,203.36 248.00,203.81 248.50,203.85 249.00,203.48 249.50,202.83 250.00,202.10 250.50,201.55 251.00,201.34 251.50,201.54 252.00,202.09 252.50,202.79 253.00,203.42 253.50,203.78 254.00,203.74 254.50,203.34 255.00,202.69 255.50,202.03 256.00,201.56 256.50,201.43 257.00,201.69 257.50,202.24 258.00,202.90 258.50,203.46 259.00,203.73 259.50,203.63 260.00,203.20 260.50,202.59 261.00,201.99 261.50,201.59 262.00,201.53 262.50,201.82 263.00,202.36 263.50,202.97 264.00,203.46 264.50,203.67 265.00,203.53 265.50,203.10 266.00,202.52 266.50,201.98 267.00,201.65 267.50,201.63 268.00,201.92 268.50,202.44 269.00,203.00 269.50,203.44 270.00,203.61 270.50,203.46 271.00,203.05 271.50,202.51 272.00,202.01 272.50,201.71 273.00,201.71 273.50,201.99 274.00,202.46 274.50,202.99 275.00,203.39 275.50,203.55 276.00,203.42 276.50,203.04 277.00,202.54 277.50,202.08 278.00,201.79 278.50,201.76 279.00,202.01 279.50,202.44 280.00,202.93 280.50,203.32 281.00,203.50 281.50,203.41 282.00,203.08 282.50,202.62 283.00,202.17 283.50,201.87 284.00,201.80 284.50,201.99 285.00,202.37 285.50,202.83 286.00,203.23 286.50,203.45 287.00,203.43 287.50,203.16 288.00,202.75 288.50,202.30 289.00,201.96 289.50,201.83 290.00,201.94 290.50,202.26 291.00,202.70 291.50,203.11 292.00,203.39 292.50,203.45 293.00,203.27 293.50,202.91 294.00,202.47 294.50,202.09 295.00,201.88 295.50,201.89 296.00,202.13 296.50,202.52 297.00,202.95 297.50,203.30 298.00,203.45 298.50,203.38 299.00,203.09 299.50,202.68 300.00,202.26 300.50,201.96 301.00,201.86 301.50,201.99 302.00,202.32 302.50,202.75 303.00,203.15 303.50,203.42 304.00,203.47 304.50,203.29 305.00,202.92 305.50,202.49 306.00,202.10 306.50,201.87 307.00,201.88 307.50,202.11 308.00,202.50 308.50,202.95 309.00,203.32 309.50,203.50 310.00,203.46 310.50,203.18 311.00,202.76 311.50,202.31 312.00,201.96 312.50,201.82 313.00,201.92 313.50,202.24 314.00,202.69 314.50,203.14 315.00,203.46 315.50,203.57 316.00,203.42 316.50,203.06 317.00,202.58 317.50,202.13 318.00,201.84 318.50,201.78 319.00,201.98 319.50,202.39 320.00,202.89 320.50,203.34 321.00,203.60 321.50,203.61 322.00,203.35 322.50,202.89 323.00,202.38 323.50,201.94 324.00,201.72 324.50,201.78 325.00,202.10 325.50,202.60 326.00,203.13 326.50,203.55 327.00,203.72 327.50,203.59 328.00,203.20 328.50,202.66 329.00,202.13 329.50,201.75 330.00,201.65 330.50,201.85 331.00,202.31 331.50,202.89 332.00,203.42 332.50,203.75 333.00,203.77 333.50,203.48 334.00,202.95 334.50,202.34 335.00,201.84 335.50,201.58 336.00,201.66 336.50,202.05 337.00,202.65 337.50,203.27 338.00,203.73 338.50,203.90 339.00,203.70 339.50,203.21 340.00,202.56 340.50,201.95 341.00,201.56 341.50,201.52 342.00,201.84 342.50,202.44 343.00,203.12 343.50,203.69 344.00,203.97 344.50,203.87 345.00,203.42 345.50,202.74 346.00,202.05 346.50,201.56 347.00,201.42 347.50,201.69 348.00,202.28 348.50,203.01 349.00,203.67 349.50,204.04 350.00,204.00 350.50,203.56 351.00,202.86 351.50,202.11 352.00,201.55 352.50,201.35 353.00,201.59 353.50,202.19 354.00,202.97 354.50,203.68 355.00,204.10 355.50,204.09 356.00,203.65 356.50,202.91 357.00,202.11 357.50,201.51 358.00,201.29 358.50,201.53 359.00,202.17 359.50,202.99 360.00,203.74 360.50,204.18 361.00,204.15 361.50,203.67 362.00,202.89 362.50,202.05 363.00,201.44 363.50,201.24 364.00,201.53 364.50,202.22 365.00,203.08 365.50,203.84 366.00,204.25 366.50,204.17 367.00,203.63 367.50,202.80 368.00,201.94 368.50,201.35 369.00,201.21 369.50,201.58 370.00,202.33 370.50,203.23 371.00,203.97 371.50,204.32 372.00,204.16 372.50,203.53 373.00,202.66 373.50,201.81 374.00,201.27 374.50,201.22 375.00,201.68 375.50,202.49 376.00,203.40 376.50,204.09 377.00,204.36 377.50,204.10 378.00,203.40 378.50,202.49 379.00,201.67 379.50,201.21 380.00,201.26 380.50,201.81 381.00,202.67 381.50,203.56 382.00,204.19 382.50,204.36 383.00,204.01 383.50,203.25 384.00,202.34 384.50,201.57 385.00,201.19 385.50,201.33 386.00,201.94 386.50,202.82 387.00,203.69 387.50,204.26 388.00,204.34 388.50,203.92 389.00,203.13 389.50,202.23 390.00,201.51 390.50,201.21 391.00,201.41 391.50,202.06 392.00,202.94 392.50,203.76 393.00,204.27 393.50,204.30 394.00,203.85 394.50,203.05 395.00,202.18 395.50,201.50 396.00,201.24 396.50,201.47 397.00,202.12 397.50,202.98 398.00,203.77 398.50,204.25 399.00,204.27 399.50,203.82 400.00,203.05 400.50,202.21 401.00,201.56 401.50,201.30 402.00,201.51 402.50,202.13 403.00,202.95 403.50,203.71 404.00,204.19 404.50,204.24 405.00,203.84 405.50,203.12 406.00,202.31 406.50,201.66 407.00,201.37 407.50,201.52 408.00,202.06 408.50,202.83 409.00,203.58 409.50,204.09 410.00,204.20 410.50,203.89 411.00,203.26 411.50,202.50 412.00,201.84 412.50,201.48 413.00,201.52 413.50,201.96 414.00,202.64 414.50,203.37 415.00,203.93 415.50,204.15 416.00,203.97 416.50,203.45 417.00,202.75 417.50,202.08 418.00,201.63 418.50,201.54 419.00,201.83 419.50,202.41 420.00,203.10 420.50,203.70 421.00,204.04 421.50,204.02 422.00,203.65 422.50,203.04 423.00,202.38 423.50,201.86 424.00,201.63 424.50,201.74 425.00,202.17 425.50,202.79 426.00,203.41 426.50,203.85 427.00,204.00 427.50,203.80 428.00,203.34 428.50,202.73 429.00,202.16 429.50,201.79 430.00,201.73 430.50,201.98 431.00,202.48 431.50,203.07 432.00,203.59 432.50,203.88 433.00,203.88 433.50,203.58 434.00,203.07 434.50,202.51 435.00,202.05 435.50,201.82 436.00,201.88 436.50,202.22 437.00,202.73 437.50,203.27 438.00,203.68 438.50,203.85 439.00,203.73 439.50,203.37 440.00,202.86 440.50,202.35 441.00,202.00 441.50,201.89 442.00,202.05 442.50,202.44 443.00,202.95 443.50,203.42 444.00,203.72 444.50,203.78 445.00,203.57 445.50,203.16 446.00,202.67 446.50,202.24 447.00,201.99 447.50,201.99 448.00,202.24 448.50,202.66 449.00,203.14 449.50,203.53 450.00,203.73 450.50,203.68 451.00,203.39 451.50,202.96 452.00,202.50 452.50,202.15 453.00,202.02 453.50,202.13 454.00,202.45 454.50,202.89 455.00,203.32 455.50,203.62 456.00,203.70 456.50,203.54 457.00,203.18 457.50,202.74 458.00,202.34 458.50,202.09 459.00,202.08 459.50,202.30 460.00,202.69 460.50,203.14 461.00,203.50 461.50,203.68 462.00,203.62 462.50,203.34 463.00,202.93 463.50,202.50 464.00,202.19 464.50,202.08 465.00,202.22 465.50,202.55 466.00,202.99 466.50,203.39 467.00,203.64 467.50,203.67 468.00,203.46 468.50,203.07 469.00,202.63 469.50,202.27 470.00,202.09 470.50,202.16 471.00,202.45 471.50,202.88 472.00,203.31 472.50,203.62 473.00,203.70 473.50,203.53 474.00,203.17 474.50,202.72 475.00,202.32 475.50,202.10 476.00,202.13 476.50,202.39 477.00,202.82 477.50,203.28 478.00,203.62 478.50,203.74 479.00,203.59 479.50,203.23 480.00,202.76 480.50,202.33 481.00,202.08 481.50,202.09 482.00,202.36 482.50,202.81 483.00,203.29 483.50,203.66 484.00,203.79 484.50,203.64 485.00,203.25 485.50,202.75 486.00,202.30 486.50,202.04 487.00,202.06 487.50,202.36 488.00,202.84 488.50,203.35 489.00,203.73 489.50,203.85 490.00,203.66 490.50,203.24 491.00,202.70 491.50,202.23 492.00,201.98 492.50,202.03 493.00,202.38 493.50,202.91 494.00,203.45 494.50,203.82 495.00,203.91 495.50,203.67 496.00,203.19 496.50,202.61 497.00,202.13 497.50,201.90 498.00,202.01 498.50,202.43 499.00,203.01 499.50,203.58 500.00,203.94 500.50,203.97 501.00,203.66 501.50,203.10 502.00,202.49 502.50,202.01 503.00,201.83 503.50,202.01 504.00,202.51 504.50,203.15 505.00,203.73 505.50,204.05 506.00,204.02 506.50,203.62 507.00,203.00 507.50,202.35 508.00,201.89 508.50,201.77 509.00,202.03 509.50,202.60 510.00,203.29 510.50,203.87 511.00,204.16 511.50,204.05 512.00,203.58 512.50,202.90 513.00,202.22 513.50,201.78 514.00,201.71 514.50,202.05 515.00,202.68 515.50,203.42 516.00,204.00 516.50,204.26 517.00,204.09 517.50,203.55 518.00,202.82 518.50,202.12 519.00,201.68 519.50,201.66 520.00,202.05 520.50,202.74 521.00,203.51 521.50,204.10 522.00,204.34 522.50,204.14 523.00,203.56 523.50,202.78 524.00,202.06 524.50,201.62 525.00,201.60 525.50,202.02 526.00,202.74 526.50,203.54 527.00,204.16 527.50,204.42 528.00,204.22 528.50,203.62 529.00,202.82 529.50,202.06 530.00,201.58 530.50,201.53 531.00,201.93 531.50,202.65 532.00,203.48 532.50,204.16 533.00,204.48 533.50,204.33 534.00,203.77 534.50,202.96 535.00,202.15 535.50,201.59 536.00,201.46 536.50,201.79 537.00,202.48 537.50,203.33 538.00,204.08 538.50,204.50 539.00,204.46 539.50,203.97 540.00,203.19 540.50,202.34 541.00,201.69 541.50,201.42 542.00,201.62 542.50,202.23 543.00,203.07 543.50,203.88 544.00,204.44 544.50,204.56 545.00,204.22 545.50,203.52 546.00,202.66 546.50,201.89 547.00,201.46 547.50,201.47 548.00,201.93 548.50,202.70 549.00,203.57 549.50,204.26 550.00,204.59 550.50,204.45 551.00,203.89 551.50,203.08 552.00,202.24 552.50,201.62 553.00,201.40 553.50,201.65 554.00,202.29 554.50,203.13 555.00,203.94 555.50,204.48 556.00,204.59 556.50,204.24 557.00,203.55 557.50,202.70 558.00,201.94 558.50,201.49 559.00,201.48 559.50,201.90 560.00,202.65 560.50,203.50 561.00,204.20 561.50,204.57 562.00,204.49 562.50,203.99 563.00,203.21 563.50,202.39 564.00,201.74 564.50,201.47 565.00,201.63 565.50,202.19 566.00,202.99 566.50,203.79 567.00,204.37 567.50,204.56 568.00,204.31 568.50,203.70 569.00,202.90 569.50,202.14 570.00,201.63 570.50,201.53 571.00,201.86 571.50,202.52 572.00,203.32 572.50,204.03 573.00,204.45 573.50,204.46 574.00,204.07 574.50,203.38 575.00,202.59 575.50,201.94 576.00,201.61 576.50,201.69 577.00,202.15 577.50,202.87 578.00,203.63 578.50,204.21 579.00,204.45 579.50,204.28 580.00,203.75 580.50,203.02 581.00,202.30 581.50,201.80 582.00,201.67 582.50,201.94 583.00,202.53 583.50,203.26 584.00,203.92 584.50,204.32 585.00,204.35 585.50,203.99 586.00,203.36 586.50,202.64 587.00,202.05 587.50,201.76 588.00,201.86 588.50,202.31 589.00,202.97 589.50,203.65 590.00,204.15 590.50,204.31 591.00,204.10 591.50,203.58 592.00,202.91 592.50,202.29 593.00,201.91 593.50,201.88 594.00,202.20 594.50,202.78 595.00,203.44 595.50,203.98 596.00,204.23 596.50,204.12 597.00,203.70 597.50,203.08 598.00,202.47 598.50,202.05 599.00,201.94 599.50,202.18 600.00,202.69 600.50,203.31 601.00,203.85 601.50,204.14 602.00,204.09 602.50,203.73 603.00,203.17 603.50,202.58 604.00,202.16 604.50,202.02 605.00,202.22 605.50,202.68 606.00,203.26 606.50,203.77 607.00,204.06 607.50,204.04 608.00,203.71 608.50,203.19 609.00,202.63 609.50,202.23 610.00,202.10 610.50,202.28 611.00,202.72 611.50,203.26 612.00,203.75 612.50,204.01 613.00,203.98 613.50,203.66 614.00,203.16 614.50,202.64 615.00,202.27 615.50,202.17 616.00,202.37 616.50,202.79 617.00,203.31 617.50,203.75 618.00,203.97 618.50,203.91 619.00,203.58 619.50,203.10 620.00,202.62 620.50,202.30 621.00,202.24 621.50,202.46 622.00,202.89 622.50,203.38 623.00,203.77 623.50,203.94 624.00,203.84 624.50,203.49 625.00,203.02 625.50,202.58 626.00,202.31 626.50,202.30 627.00,202.56 627.50,202.99 628.00,203.45 628.50,203.80 629.00,203.92 629.50,203.78 630.00,203.41 630.50,202.95 631.00,202.54 631.50,202.32 632.00,202.36 632.50,202.64 633.00,203.08 633.50,203.53 634.00,203.84 634.50,203.91 635.00,203.72 635.50,203.34 636.00,202.88 636.50,202.50 637.00,202.32 637.50,202.40 638.00,202.72 638.50,203.16 639.00,203.59 639.50,203.87 640.00,203.91 640.50,203.69 641.00,203.28 641.50,202.83 642.00,202.47 642.50,202.32 643.00,202.43 643.50,202.77 644.00,203.22 644.50,203.65 645.00,203.91 645.50,203.92 646.00,203.68 646.50,203.26 647.00,202.79 647.50,202.44 648.00,202.30 648.50,202.43 649.00,202.78 649.50,203.25 650.00,203.68 650.50,203.95 651.00,203.96 651.50,203.71 652.00,203.27 652.50,202.79 653.00,202.42 653.50,202.27 654.00,202.39 654.50,202.75 655.00,203.23 655.50,203.70 656.00,203.99 656.50,204.02 657.00,203.78 657.50,203.34 658.00,202.83 658.50,202.42 659.00,202.22 659.50,202.31 660.00,202.66 660.50,203.16 661.00,203.67 661.50,204.02 662.00,204.11 662.50,203.90 663.00,203.47 663.50,202.93 664.00,202.46 664.50,202.19 665.00,202.21 665.50,202.51 666.00,203.02 666.50,203.57 667.00,204.00 667.50,204.19 668.00,204.07 668.50,203.67 669.00,203.12 669.50,202.57 670.00,202.19 670.50,202.10 671.00,202.32 671.50,202.80 672.00,203.39 672.50,203.92 673.00,204.23 673.50,204.24 674.00,203.93 674.50,203.39 675.00,202.77 675.50,202.27 676.00,202.03 676.50,202.11 677.00,202.51 677.50,203.11 678.00,203.73 678.50,204.20 679.00,204.37 679.50,204.20 680.00,203.73 680.50,203.09 681.00,202.47 681.50,202.05 682.00,201.95 682.50,202.20 683.00,202.74 683.50,203.41 684.00,204.03 684.50,204.40 685.00,204.43 685.50,204.10 686.00,203.50 686.50,202.80 687.00,202.21 687.50,201.89 688.00,201.94 688.50,202.35 689.00,203.00 689.50,203.72 690.00,204.29 690.50,204.55 691.00,204.42 691.50,203.94 692.00,203.24 692.50,202.52 693.00,201.98 693.50,201.79 694.00,202.00 694.50,202.56 695.00,203.30 695.50,204.02 696.00,204.51 696.50,204.62 697.00,204.33 697.50,203.71 698.00,202.94 698.50,202.23" fill="none" stroke="#2a2a2a" stroke-width="1.05" stroke-linejoin="round"/><path d="M497.5 202 L498 198 L498.5 202 M543 202 L543.5 197.5 L544 202 M676.5 203 L677.5 209 L678.5 203" fill="none" stroke="#444" stroke-width="1"/><polyline points="34.00,307.29 34.50,307.29 35.00,307.45 35.50,307.65 36.00,307.75 36.50,307.67 37.00,307.48 37.50,307.34 38.00,307.33 38.50,307.43 39.00,307.54 39.50,307.57 40.00,307.54 40.50,307.50 41.00,307.52 41.50,307.57 42.00,307.58 42.50,307.50 43.00,307.37 43.50,307.30 44.00,307.38 44.50,307.56 45.00,307.72 45.50,307.73 46.00,307.58 46.50,307.38 47.00,307.28 47.50,307.33 48.00,307.49 48.50,307.61 49.00,307.62 49.50,307.56 50.00,307.49 50.50,307.49 51.00,307.52 51.50,307.53 52.00,307.46 52.50,307.37 53.00,307.36 53.50,307.47 54.00,307.64 54.50,307.73 55.00,307.67 55.50,307.47 56.00,307.30 56.50,307.26 57.00,307.39 57.50,307.58 58.00,307.68 58.50,307.64 59.00,307.53 59.50,307.44 60.00,307.44 60.50,307.48 61.00,307.50 61.50,307.46 62.00,307.41 62.50,307.43 63.00,307.54 63.50,307.67 64.00,307.69 64.50,307.57 65.00,307.38 65.50,307.26 66.00,307.30 66.50,307.49 67.00,307.67 67.50,307.72 68.00,307.62 68.50,307.46 69.00,307.38 69.50,307.40 70.00,307.47 70.50,307.52 71.00,307.50 71.50,307.46 72.00,307.49 72.50,307.58 73.00,307.65 73.50,307.62 74.00,307.47 74.50,307.31 75.00,307.27 75.50,307.39 76.00,307.60 76.50,307.73 77.00,307.71 77.50,307.54 78.00,307.38 78.50,307.32 79.00,307.39 79.50,307.51 80.00,307.56 80.50,307.29 81.00,307.00 81.50,306.76 82.00,306.57 82.50,305.60 83.00,304.54 83.50,303.41 84.00,302.31 84.50,301.33 85.00,300.80 85.50,300.28 86.00,299.65 86.50,298.84 87.00,297.94 87.50,297.86 88.00,297.92 88.50,298.12 89.00,298.32 89.50,298.42 90.00,298.36 90.50,298.28 91.00,298.25 91.50,298.27 92.00,298.27 92.50,298.20 93.00,298.09 93.50,298.03 94.00,298.09 94.50,298.25 95.00,298.36 95.50,298.33 96.00,298.15 96.50,297.94 97.00,297.84 97.50,297.91 98.00,298.08 98.50,298.20 99.00,298.19 99.50,298.08 100.00,297.96 100.50,297.95 101.00,297.99 101.50,298.02 102.00,298.00 102.50,297.95 103.00,297.95 103.50,298.05 104.00,298.20 104.50,298.27 105.00,298.19 105.50,298.01 106.00,297.86 106.50,297.86 107.00,298.02 107.50,298.23 108.00,298.33 108.50,298.28 109.00,298.14 109.50,298.03 110.00,298.03 110.50,298.11 111.00,298.16 111.50,298.16 112.00,298.13 112.50,298.15 113.00,298.24 113.50,298.33 114.00,298.35 114.50,298.23 115.00,298.07 115.50,297.98 116.00,298.07 116.50,298.27 117.00,298.45 117.50,298.48 118.00,298.36 118.50,298.19 119.00,298.10 119.50,298.15 120.00,298.26 120.50,298.34 121.00,298.35 121.50,298.31 122.00,298.32 122.50,298.37 123.00,298.43 123.50,298.41 124.00,298.29 124.50,298.17 125.00,298.16 125.50,298.30 126.00,298.50 126.50,298.63 127.00,298.58 127.50,298.40 128.00,298.23 128.50,298.20 129.00,298.31 129.50,298.46 130.00,298.54 130.50,298.52 131.00,298.46 131.50,298.44 132.00,298.48 132.50,298.51 133.00,298.48 133.50,298.39 134.00,298.32 134.50,298.37 135.00,298.53 135.50,298.70 136.00,298.75 136.50,298.62 137.00,298.43 137.50,298.30 138.00,298.34 138.50,298.51 139.00,298.68 139.50,298.73 140.00,298.67 140.50,298.57 141.00,298.53 141.50,298.56 142.00,298.60 142.50,298.59 143.00,298.53 143.50,298.51 144.00,298.59 144.50,298.74 145.00,298.85 145.50,298.82 146.00,298.65 146.50,298.48 147.00,298.42 147.50,298.54 148.00,298.75 148.50,298.89 149.00,298.88 149.50,299.21 150.00,299.53 150.50,299.94 151.00,300.44 151.50,301.25 152.00,302.00 152.50,302.71 153.00,303.45 153.50,304.27 154.00,305.13 154.50,305.54 155.00,305.83 155.50,306.03 156.00,306.27 156.50,306.33 157.00,306.53 157.50,306.76 158.00,306.87 158.50,306.81 159.00,306.67 159.50,306.57 160.00,306.61 160.50,306.73 161.00,306.85 161.50,306.90 162.00,306.90 162.50,306.91 163.00,306.99 163.50,307.08 164.00,307.11 164.50,307.04 165.00,306.93 165.50,306.90 166.00,307.02 166.50,307.25 167.00,307.44 167.50,307.47 168.00,307.34 168.50,307.18 169.00,307.13 169.50,307.22 170.00,307.40 170.50,307.48 171.00,307.46 171.50,307.38 172.00,307.32 172.50,307.32 173.00,307.34 173.50,307.30 174.00,307.19 174.50,307.08 175.00,307.06 175.50,307.18 176.00,307.34 176.50,307.40 177.00,307.30 177.50,307.09 178.00,306.90 178.50,306.86 179.00,306.98 179.50,307.13 180.00,307.20 180.50,307.13 181.00,307.02 181.50,306.93 182.00,306.93 182.50,306.95 183.00,306.92 183.50,306.84 184.00,306.77 184.50,306.79 185.00,306.91 185.50,307.02 186.00,307.01 186.50,306.85 187.00,306.64 187.50,306.51 188.00,306.56 188.50,306.72 189.00,306.87 189.50,306.89 190.00,306.76 190.50,306.61 191.00,306.53 191.50,306.54 192.00,306.58 192.50,306.58 193.00,306.52 193.50,306.48 194.00,306.51 194.50,306.60 195.00,306.66 195.50,306.59 196.00,306.41 196.50,306.23 197.00,306.18 197.50,306.29 198.00,306.48 198.50,306.59 199.00,306.53 199.50,306.35 200.00,306.18 200.50,305.57 201.00,305.07 201.50,304.59 202.00,304.04 202.50,303.35 203.00,302.66 203.50,302.02 204.00,301.43 204.50,300.78 205.00,300.04 205.50,299.64 206.00,299.29 206.50,299.08 207.00,299.01 207.50,299.17 208.00,299.19 208.50,299.05 209.00,298.83 209.50,298.67 210.00,298.67 210.50,298.77 211.00,298.86 211.50,298.86 212.00,298.79 212.50,298.71 213.00,298.69 213.50,298.71 214.00,298.68 214.50,298.58 215.00,298.44 215.50,298.38 216.00,298.45 216.50,298.61 217.00,298.71 217.50,298.65 218.00,298.45 218.50,298.23 219.00,298.13 219.50,298.20 220.00,298.35 220.50,298.43 221.00,298.40 221.50,298.28 222.00,298.18 222.50,298.15 223.00,298.16 223.50,298.14 224.00,298.06 224.50,297.96 225.00,297.95 225.50,298.04 225.50,298.16 226.00,296.50 226.50,298.16 226.50,298.22 227.00,298.12 227.50,297.92 228.00,297.77 228.50,297.78 229.00,297.94 229.50,298.13 230.00,298.20 230.50,298.13 231.00,298.00 231.50,297.91 232.00,297.92 232.50,297.97 233.00,298.00 233.50,297.97 234.00,297.94 234.50,297.97 235.00,298.07 235.50,298.17 236.00,298.16 236.50,298.02 237.00,297.84 237.50,297.76 238.00,297.85 238.50,298.05 239.00,298.21 239.50,298.22 240.00,298.08 240.50,297.92 241.00,297.85 241.50,297.89 242.00,297.99 242.50,298.04 243.00,298.02 243.50,297.99 244.00,298.01 244.50,298.08 245.00,298.13 245.50,298.08 246.00,297.93 246.50,297.80 247.00,297.80 247.50,297.95 248.00,298.15 248.50,298.25 249.00,298.18 249.50,297.99 250.00,297.83 250.50,297.81 251.00,297.91 251.50,298.04 252.00,298.09 252.50,298.06 253.00,298.88 253.50,299.76 254.00,300.67 254.50,301.57 255.00,302.50 255.50,303.39 256.00,304.32 256.50,305.38 257.00,306.55 257.50,306.77 258.00,306.85 258.50,306.76 259.00,306.62 259.50,306.56 260.00,306.66 260.50,306.88 261.00,307.08 261.50,307.16 262.00,307.15 262.50,307.12 263.00,307.16 263.50,307.25 264.00,307.32 264.50,307.34 265.00,307.32 265.50,307.35 266.00,307.51 266.50,307.72 267.00,307.87 267.50,307.88 268.00,307.75 268.50,307.63 269.00,307.64 269.50,307.82 270.00,308.07 270.50,308.21 271.00,308.20 271.50,308.09 272.00,308.00 272.50,308.00 273.00,308.07 273.50,308.12 274.00,308.12 274.50,308.09 275.00,308.12 275.50,308.23 276.00,308.36 276.50,308.41 277.00,308.32 277.50,308.15 278.00,308.04 278.50,308.10 279.00,308.29 279.50,308.50 280.00,308.58 280.50,308.50 281.00,308.35 281.50,308.26 282.00,308.30 282.50,308.40 283.00,308.48 283.50,308.49 284.00,308.47 284.50,308.50 285.00,308.59 285.50,308.67 286.00,308.67 286.50,308.56 287.00,308.42 287.50,308.39 288.00,308.52 288.50,308.74 289.00,308.90 289.50,308.90 290.00,308.75 290.50,308.56 291.00,308.49 291.50,308.55 292.00,308.66 292.50,308.73 293.00,308.71 293.50,308.65 294.00,308.62 294.50,308.65 295.00,308.68 295.50,308.63 296.00,308.50 296.50,308.39 297.00,308.40 297.50,308.54 298.00,308.71 298.50,308.78 299.00,308.67 299.50,308.46 300.00,308.29 300.50,308.20 301.00,308.24 301.50,308.30 302.00,308.27 302.50,308.13 303.00,307.95 303.50,307.82 304.00,307.75 304.50,307.68 305.00,307.55 305.50,307.38 306.00,307.24 306.50,307.21 307.00,307.26 307.50,307.30 308.00,307.20 308.50,306.63 309.00,306.01 309.50,305.50 310.00,305.16 310.50,304.93 311.00,304.66 311.50,303.88 312.00,302.98 312.50,302.06 313.00,301.22 313.50,300.45 314.00,300.00 314.50,299.49 315.00,298.94 315.50,298.42 316.00,298.00 316.50,298.13 317.00,298.20 317.50,298.13 318.00,297.96 318.50,297.80 319.00,297.79 319.50,297.94 320.00,298.14 320.50,298.26 321.00,298.21 321.50,298.05 322.00,297.93 322.50,297.91 323.00,297.99 323.50,298.06 324.00,298.07 324.50,298.04 325.00,298.04 325.50,298.10 326.00,298.19 326.50,298.21 327.00,298.10 327.50,297.95 328.00,297.85 328.50,297.92 329.00,298.11 329.50,298.29 330.00,298.33 330.50,298.21 331.00,298.03 331.50,297.92 332.00,297.96 332.50,298.08 333.00,298.18 333.50,298.19 334.00,298.15 334.50,298.13 335.00,298.16 335.50,298.21 336.00,298.20 336.50,298.10 337.00,297.98 337.50,297.96 338.00,298.08 338.50,298.28 339.00,298.40 339.50,298.36 340.00,298.18 340.50,298.00 341.00,297.95 341.50,298.05 342.00,298.21 342.50,298.31 343.00,298.29 343.50,298.22 344.00,298.17 344.50,298.19 345.00,298.23 345.50,298.21 346.00,298.13 346.50,298.07 347.00,298.10 347.50,298.24 348.00,298.40 348.50,298.45 349.00,298.33 349.50,298.13 350.00,298.00 350.50,298.03 351.00,298.19 351.50,298.37 352.00,298.43 352.50,298.36 353.00,298.25 353.50,298.18 354.00,298.21 354.50,298.25 355.00,298.26 355.50,298.21 356.00,298.18 356.50,298.24 357.00,298.37 357.50,298.47 358.00,298.45 358.50,298.29 359.00,298.11 359.50,298.05 360.00,298.16 360.50,298.36 361.00,298.51 361.50,298.50 362.00,298.37 362.50,298.22 363.00,298.17 363.50,298.22 364.00,298.29 364.50,298.32 365.00,298.29 365.50,298.27 366.00,298.85 366.50,299.49 367.00,300.07 367.50,300.54 368.00,300.91 368.50,301.58 369.00,302.40 369.50,303.36 370.00,304.36 370.50,305.25 371.00,305.54 371.50,305.73 372.00,305.96 372.50,306.33 373.00,306.44 373.50,306.55 374.00,306.59 374.50,306.55 375.00,306.53 375.50,306.56 376.00,306.62 376.50,306.63 377.00,306.55 377.50,306.42 378.00,306.36 378.50,306.45 379.00,306.64 379.50,306.80 380.00,306.82 380.50,306.67 381.00,306.48 381.50,306.38 382.00,306.45 382.50,306.60 383.00,306.73 383.50,306.75 384.00,306.68 384.50,306.63 385.00,306.64 385.50,306.68 386.00,306.68 386.50,306.61 387.00,306.53 387.50,306.53 388.00,306.65 388.50,306.83 389.00,306.92 389.50,306.86 390.00,306.67 390.50,306.50 391.00,306.48 391.50,306.62 392.00,306.80 392.50,306.91 393.00,306.87 393.50,306.77 394.00,306.69 394.50,306.70 395.00,306.75 395.50,306.76 396.00,306.72 396.50,306.68 397.00,306.71 397.50,306.84 398.00,306.97 398.50,306.99 399.00,306.87 399.50,306.68 400.00,306.57 400.50,306.63 401.00,306.82 401.50,307.00 402.00,307.05 402.50,306.96 403.00,306.81 403.50,306.74 404.00,306.77 404.50,306.84 405.00,306.89 405.50,306.87 406.00,306.85 406.50,306.88 407.00,306.98 407.50,307.06 408.00,307.02 408.50,306.88 409.00,306.73 409.50,306.70 410.00,306.83 410.50,307.04 411.00,307.18 411.50,307.15 412.00,306.99 412.50,306.83 413.00,306.79 413.50,306.87 414.00,306.99 414.50,307.04 415.00,307.03 415.50,306.99 416.00,307.01 416.50,306.57 417.00,306.10 417.50,305.54 418.00,304.90 418.50,304.30 419.00,303.44 419.50,302.70 420.00,301.99 420.50,301.15 421.00,300.14 421.50,299.36 422.00,298.65 422.50,298.08 423.00,297.64 423.50,297.80 424.00,297.86 424.50,297.83 425.00,297.79 425.50,297.80 426.00,297.86 426.50,297.89 427.00,297.85 427.50,297.77 428.00,297.76 428.50,297.86 429.00,298.05 429.50,298.20 430.00,298.20 430.50,298.06 431.00,297.88 431.50,297.82 432.00,297.93 432.50,298.13 433.00,298.28 433.50,298.31 434.00,298.23 434.50,298.16 435.00,298.16 435.50,298.22 436.00,298.26 436.50,298.25 437.00,298.21 437.50,298.22 438.00,298.33 438.50,298.47 439.00,298.55 439.50,298.47 440.00,298.29 440.50,298.14 441.00,298.15 441.50,298.32 442.00,298.52 442.50,298.62 443.00,298.56 443.50,298.43 444.00,298.33 444.50,298.34 445.00,298.41 445.50,298.47 446.00,298.46 446.50,298.44 447.00,298.46 447.50,298.55 448.00,298.66 448.50,298.66 449.00,298.55 449.50,298.38 450.00,298.31 450.50,298.40 451.00,298.60 451.50,298.78 452.00,298.81 452.50,298.69 453.00,298.52 453.50,298.44 454.00,298.49 454.50,298.61 455.00,298.69 455.50,298.69 456.00,298.66 456.50,298.67 457.00,298.74 457.50,298.80 458.00,298.77 458.50,298.65 458.50,298.53 459.00,294.50 459.50,298.53 459.50,298.53 460.00,298.68 460.50,298.88 461.00,299.00 461.50,298.95 462.00,298.77 462.50,298.61 463.00,298.59 463.50,298.70 464.00,298.85 464.50,298.93 465.00,298.91 465.50,298.86 466.00,298.84 466.50,298.88 467.00,298.92 467.50,298.88 468.00,298.79 468.50,298.73 469.00,298.79 469.50,298.95 470.00,299.12 470.50,299.17 471.00,299.04 471.50,298.85 472.00,298.73 472.50,298.78 473.00,298.95 473.50,299.11 474.00,299.16 474.50,299.49 475.00,299.79 475.50,300.15 476.00,300.58 476.50,301.01 477.00,301.98 477.50,302.92 478.00,303.89 478.50,304.97 479.00,305.61 479.50,306.21 480.00,306.67 480.50,306.99 481.00,306.82 481.50,306.78 482.00,306.92 482.50,307.13 483.00,307.28 483.50,307.27 484.00,307.16 484.50,307.05 485.00,307.03 485.50,307.10 486.00,307.17 486.50,307.18 487.00,307.15 487.50,307.16 488.00,307.25 488.50,307.37 489.00,307.43 489.50,307.35 490.00,307.19 490.50,307.07 491.00,307.12 491.50,307.30 492.00,307.51 492.50,307.60 493.00,307.52 493.50,307.36 494.00,307.26 494.50,307.28 495.00,307.39 495.50,307.49 496.00,307.51 496.50,307.49 496.50,307.49 497.00,305.00 497.50,307.49 497.50,307.57 498.00,307.65 498.50,307.66 499.00,307.58 499.50,307.45 500.00,307.42 500.50,307.54 501.00,307.75 501.50,307.93 502.00,307.94 502.50,307.80 503.00,307.63 503.50,307.57 504.00,307.66 504.50,307.83 505.00,307.94 505.50,307.96 506.00,307.92 506.50,307.91 507.00,307.95 507.50,308.01 508.00,308.01 508.50,307.94 509.00,307.86 509.50,307.89 510.00,308.05 510.50,308.25 511.00,308.35 511.50,308.29 512.00,308.11 512.50,307.97 513.00,307.97 513.50,308.13 514.00,308.32 514.50,308.42 515.00,308.40 515.50,308.32 516.00,308.28 516.50,308.32 517.00,308.38 517.50,308.39 518.00,308.34 518.50,308.32 519.00,308.38 519.50,308.54 520.00,308.69 520.50,308.68 521.00,308.52 521.50,308.31 522.00,308.19 522.50,308.24 523.00,308.41 523.50,308.56 524.00,308.57 524.50,308.45 525.00,308.30 525.50,308.22 526.00,308.24 526.50,308.28 527.00,308.27 527.50,308.22 528.00,308.18 528.50,308.22 529.00,308.32 529.50,308.37 530.00,308.30 530.50,308.11 531.00,307.94 531.50,307.90 532.00,308.02 532.50,308.21 533.00,308.31 533.50,308.25 534.00,308.07 534.50,307.91 535.00,307.86 535.50,307.92 536.00,307.39 536.50,306.79 537.00,306.13 537.50,305.49 538.00,304.28 538.50,303.10 539.00,301.87 539.50,300.53 540.00,299.78 540.50,299.08 541.00,298.53 541.50,298.71 542.00,298.88 542.50,298.92 543.00,298.79 543.00,298.59 543.50,293.50 544.00,298.59 544.00,298.46 544.50,298.47 545.00,298.59 545.50,298.70 546.00,298.71 546.50,298.65 547.00,298.60 547.50,298.61 548.00,298.64 548.50,298.63 549.00,298.54 549.50,298.42 550.00,298.38 550.50,298.47 551.00,298.65 551.50,298.77 552.00,298.72 552.50,298.53 553.00,298.34 553.50,298.26 554.00,298.35 554.50,298.51 555.00,298.62 555.50,298.60 556.00,298.50 556.50,298.42 557.00,298.41 557.50,298.44 558.00,298.43 558.50,298.36 559.00,298.29 559.50,298.29 560.00,298.41 560.50,298.55 561.00,298.59 561.50,298.48 562.00,298.27 562.50,298.12 563.00,298.12 563.50,298.28 564.00,298.45 564.50,298.52 565.00,298.44 565.50,298.30 566.00,298.21 566.50,298.21 567.00,298.26 567.50,298.27 568.00,298.23 568.50,298.18 569.00,298.21 569.50,298.31 570.00,298.40 570.50,298.38 571.00,298.22 571.50,298.03 572.00,297.95 572.50,298.04 573.00,298.23 573.50,298.38 574.00,298.38 574.50,298.23 575.00,298.06 575.50,297.99 576.00,298.03 576.50,298.11 577.00,298.15 577.50,298.12 578.00,298.08 578.50,298.10 579.00,298.17 579.50,298.20 580.00,298.14 580.50,297.98 581.00,297.85 581.50,297.84 582.00,297.98 582.50,298.18 583.00,298.26 583.50,298.18 584.00,297.99 584.50,298.33 585.00,298.81 585.50,299.42 586.00,300.04 586.50,300.59 587.00,301.55 587.50,302.51 588.00,303.51 588.50,304.55 589.00,305.57 589.50,305.54 590.00,305.46 590.50,305.43 591.00,305.54 591.50,305.75 592.00,305.45 592.50,305.01 593.00,304.40 593.50,303.73 594.00,303.16 594.50,302.75 595.00,302.44 595.50,302.12 596.00,302.34 596.50,302.47 597.00,302.59 597.50,302.77 598.00,303.01 598.50,303.07 599.00,303.07 599.50,303.04 600.00,303.07 600.50,303.53 601.00,304.05 601.50,304.50 602.00,304.80 602.50,304.97 603.00,305.15 603.50,305.47 604.00,305.95 604.50,306.50 605.00,306.97 605.50,307.30 606.00,307.54 606.50,307.43 607.00,307.42 607.50,307.47 608.00,307.50 608.50,307.47 609.00,307.43 609.50,307.44 610.00,307.54 610.50,307.66 611.00,307.68 611.50,307.57 612.00,307.38 612.50,307.26 613.00,307.30 613.50,307.49 614.00,307.67 614.50,307.73 615.00,307.63 615.50,307.46 616.00,307.36 616.50,307.38 617.00,307.47 617.50,307.52 618.00,307.51 618.50,307.48 619.00,307.49 619.50,307.57 620.00,307.63 620.50,307.61 621.00,307.48 621.50,307.32 622.00,307.28 622.50,307.39 623.00,307.59 623.50,307.74 624.00,307.71 624.50,307.55 625.00,307.37 625.50,307.31 626.00,307.38 626.50,307.51 627.00,307.58 627.50,307.56 628.00,307.51 628.50,307.50 629.00,307.55 629.50,307.58 630.00,307.53 630.50,307.42 631.00,307.32 631.50,307.34 632.00,307.49 632.50,307.68 633.00,307.75 633.50,307.64 634.00,307.44 634.50,307.29 635.00,307.29 635.50,307.43 636.00,307.58 636.50,307.64 637.00,307.59 637.50,307.51 638.00,307.48 638.50,307.50 639.00,307.53 639.50,306.86 640.00,306.15 640.50,305.48 641.00,304.93 641.50,303.96 642.00,302.96 642.50,301.83 643.00,300.54 643.50,299.92 644.00,299.40 644.50,299.06 645.00,298.82 645.50,298.96 646.00,298.96 646.50,298.85 647.00,298.73 647.50,298.68 648.00,298.71 648.50,298.74 649.00,298.72 649.50,298.66 650.00,298.64 650.50,298.71 651.00,298.83 651.50,298.89 652.00,298.81 652.50,298.62 653.00,298.45 653.50,298.44 654.00,298.58 654.50,298.77 655.00,298.87 655.50,298.80 656.00,298.64 656.50,298.51 657.00,298.48 657.50,298.55 658.00,298.60 658.50,298.60 659.00,298.56 659.50,298.55 660.00,298.60 660.50,298.68 661.00,298.68 661.50,298.57 662.00,298.39 662.50,298.29 663.00,298.35 663.50,298.54 664.00,298.70 664.50,298.73 665.00,298.59 665.50,298.40 666.00,298.29 666.50,298.31 667.00,298.42 667.50,298.50 668.00,298.50 668.50,298.45 669.00,298.42 669.50,298.45 670.00,298.49 670.50,298.46 671.00,298.34 671.50,298.21 672.00,298.18 672.50,298.30 673.00,298.48 673.50,298.59 674.00,298.53 674.50,298.34 675.00,298.15 675.50,298.10 676.00,298.19 676.50,298.34 676.50,298.42 677.00,305.50 677.50,298.42 677.50,298.39 678.00,298.30 678.50,298.25 679.00,298.26 679.50,298.29 680.00,298.25 680.50,298.16 681.00,298.08 681.50,298.11 682.00,298.24 682.50,298.39 683.00,298.43 683.50,298.29 684.00,298.08 684.50,297.94 685.00,297.96 685.50,298.12 686.00,298.28 686.50,298.32 687.00,298.24 687.50,298.12 688.00,298.05 688.50,298.06 689.00,298.10 689.50,298.09 690.00,298.02 690.50,297.99 691.00,298.04 691.50,298.16 692.00,298.25 692.50,298.21 693.00,298.04 693.50,297.85 694.00,297.78 694.50,297.88 695.00,298.07 695.50,298.21 696.00,299.03 696.50,299.73 697.00,300.42 697.50,303.87 698.00,307.42" fill="none" stroke="#404040" stroke-width="1.05" stroke-linejoin="round"/><polyline points="34.00,399.29 34.50,399.29 35.00,399.45 35.50,399.65 36.00,399.75 36.50,399.67 37.00,399.48 37.50,399.34 38.00,399.33 38.50,399.43 39.00,399.54 39.50,399.57 40.00,399.54 40.50,399.50 41.00,399.52 41.50,399.57 42.00,399.58 42.50,399.50 43.00,399.37 43.50,399.30 44.00,399.38 44.50,399.56 45.00,399.72 45.50,399.73 46.00,399.58 46.50,399.38 47.00,399.28 47.50,399.33 48.00,399.49 48.50,399.61 49.00,399.62 49.50,399.56 50.00,399.49 50.50,399.49 51.00,399.52 51.50,399.53 52.00,399.46 52.50,399.37 53.00,399.36 53.50,399.47 54.00,399.64 54.50,399.73 55.00,399.67 55.50,399.47 56.00,399.30 56.50,399.26 57.00,399.39 57.50,399.58 58.00,399.68 58.50,399.64 59.00,399.53 59.50,399.44 60.00,399.44 60.50,399.48 61.00,399.50 61.50,399.46 62.00,399.41 62.50,399.43 63.00,399.54 63.50,399.67 64.00,399.69 64.50,399.57 65.00,399.38 65.50,399.26 66.00,399.30 66.50,399.49 67.00,399.67 67.50,399.72 68.00,399.62 68.50,399.46 69.00,399.38 69.50,399.40 70.00,399.47 70.50,399.52 71.00,399.50 71.50,399.46 72.00,399.49 72.50,399.58 73.00,399.65 73.50,399.62 74.00,399.47 74.50,399.31 75.00,399.27 75.50,399.39 76.00,399.60 76.50,399.73 77.00,399.71 77.50,399.54 78.00,399.38 78.50,399.32 79.00,399.39 79.50,399.51 80.00,399.56 80.50,399.29 81.00,399.00 81.50,398.76 82.00,398.57 82.50,397.60 83.00,396.54 83.50,395.41 84.00,394.31 84.50,393.33 85.00,392.80 85.50,392.28 86.00,391.65 86.50,390.84 87.00,389.94 87.50,389.86 88.00,389.92 88.50,390.12 89.00,390.32 89.50,390.42 90.00,390.36 90.50,390.28 91.00,390.25 91.50,390.27 92.00,390.27 92.50,390.20 93.00,390.09 93.50,390.03 94.00,390.09 94.50,390.25 95.00,390.36 95.50,390.33 96.00,390.15 96.50,389.94 97.00,389.84 97.50,389.91 98.00,390.08 98.50,390.20 99.00,390.19 99.50,390.08 100.00,389.96 100.50,389.95 101.00,389.99 101.50,390.02 102.00,390.00 102.50,389.95 103.00,389.95 103.50,390.05 104.00,390.20 104.50,390.27 105.00,390.19 105.50,390.01 106.00,389.86 106.50,389.86 107.00,390.02 107.50,390.23 108.00,390.33 108.50,390.28 109.00,390.14 109.50,390.03 110.00,390.03 110.50,390.11 111.00,390.16 111.50,390.16 112.00,390.13 112.50,390.15 113.00,390.24 113.50,390.33 114.00,390.35 114.50,390.23 115.00,390.07 115.50,389.98 116.00,390.07 116.50,390.27 117.00,390.45 117.50,390.48 118.00,390.36 118.50,390.19 119.00,390.10 119.50,390.15 120.00,390.26 120.50,390.34 121.00,390.35 121.50,390.31 122.00,390.32 122.50,390.37 123.00,390.43 123.50,390.41 124.00,390.29 124.50,390.17 125.00,390.16 125.50,390.30 126.00,390.50 126.50,390.63 127.00,390.58 127.50,390.40 128.00,390.23 128.50,390.20 129.00,390.31 129.50,390.46 130.00,390.54 130.50,390.52 131.00,390.46 131.50,390.44 132.00,390.48 132.50,390.51 133.00,390.48 133.50,390.39 134.00,390.32 134.50,390.37 135.00,390.53 135.50,390.70 136.00,390.75 136.50,390.62 137.00,390.43 137.50,390.30 138.00,390.34 138.50,390.51 139.00,390.68 139.50,390.73 140.00,390.67 140.50,390.57 141.00,390.53 141.50,390.56 142.00,390.60 142.50,390.59 143.00,390.53 143.50,390.51 144.00,390.59 144.50,390.74 145.00,390.85 145.50,390.82 146.00,390.65 146.50,390.48 147.00,390.42 147.50,390.54 148.00,390.75 148.50,390.89 149.00,390.88 149.50,391.21 150.00,391.53 150.50,391.94 151.00,392.44 151.50,393.25 152.00,394.00 152.50,394.71 153.00,395.45 153.50,396.27 154.00,397.13 154.50,397.54 155.00,397.83 155.50,398.03 156.00,398.27 156.50,398.33 157.00,398.53 157.50,398.76 158.00,398.87 158.50,398.81 159.00,398.67 159.50,398.57 160.00,398.61 160.50,398.73 161.00,398.85 161.50,398.90 162.00,398.90 162.50,398.91 163.00,398.99 163.50,399.08 164.00,399.11 164.50,399.04 165.00,398.93 165.50,398.90 166.00,399.02 166.50,399.25 167.00,399.44 167.50,399.47 168.00,399.34 168.50,399.18 169.00,399.13 169.50,399.22 170.00,399.40 170.50,399.48 171.00,399.46 171.50,399.38 172.00,399.32 172.50,399.32 173.00,399.34 173.50,399.30 174.00,399.19 174.50,399.08 175.00,399.06 175.50,399.18 176.00,399.34 176.50,399.40 177.00,399.30 177.50,399.09 178.00,398.90 178.50,398.86 179.00,398.98 179.50,399.13 180.00,399.20 180.50,399.13 181.00,399.02 181.50,398.93 182.00,398.93 182.50,398.95 183.00,398.92 183.50,398.84 184.00,398.77 184.50,398.79 185.00,398.91 185.50,399.02 186.00,399.01 186.50,398.85 187.00,398.64 187.50,398.51 188.00,398.56 188.50,398.72 189.00,398.87 189.50,398.89 190.00,398.76 190.50,398.61 191.00,398.53 191.50,398.54 192.00,398.58 192.50,398.58 193.00,398.52 193.50,398.48 194.00,398.51 194.50,398.60 195.00,398.66 195.50,398.59 196.00,398.41 196.50,398.23 197.00,398.18 197.50,398.29 198.00,398.48 198.50,398.59 199.00,398.53 199.50,398.35 200.00,398.18 200.50,397.57 201.00,397.07 201.50,396.59 202.00,396.04 202.50,395.35 203.00,394.66 203.50,394.02 204.00,393.43 204.50,392.78 205.00,392.04 205.50,391.64 206.00,391.29 206.50,391.08 207.00,391.01 207.50,391.17 208.00,391.19 208.50,391.05 209.00,390.83 209.50,390.67 210.00,390.67 210.50,390.77 211.00,390.86 211.50,390.86 212.00,390.79 212.50,390.71 213.00,390.69 213.50,390.71 214.00,390.68 214.50,390.58 215.00,390.44 215.50,390.38 216.00,390.45 216.50,390.61 217.00,390.71 217.50,390.65 218.00,390.45 218.50,390.23 219.00,390.13 219.50,390.20 220.00,390.35 220.50,390.43 221.00,390.40 221.50,390.28 222.00,390.18 222.50,390.15 223.00,390.16 223.50,390.14 224.00,390.06 224.50,389.96 225.00,389.95 225.50,390.04 225.50,390.16 226.00,388.50 226.50,390.16 226.50,390.22 227.00,390.12 227.50,389.92 228.00,389.77 228.50,389.78 229.00,389.94 229.50,390.13 230.00,390.20 230.50,390.13 231.00,390.00 231.50,389.91 232.00,389.92 232.50,389.97 233.00,390.00 233.50,389.97 234.00,389.94 234.50,389.97 235.00,390.07 235.50,390.17 236.00,390.16 236.50,390.02 237.00,389.84 237.50,389.76 238.00,389.85 238.50,390.05 239.00,390.21 239.50,390.22 240.00,390.08 240.50,389.92 241.00,389.85 241.50,389.89 242.00,389.99 242.50,390.04 243.00,390.02 243.50,389.99 244.00,390.01 244.50,390.08 245.00,390.13 245.50,390.08 246.00,389.93 246.50,389.80 247.00,389.80 247.50,389.95 248.00,390.15 248.50,390.25 249.00,390.18 249.50,389.99 250.00,389.83 250.50,389.81 251.00,389.91 251.50,390.04 252.00,390.09 252.50,390.06 253.00,390.88 253.50,391.76 254.00,392.67 254.50,393.57 255.00,394.50 255.50,395.39 256.00,396.32 256.50,397.38 257.00,398.55 257.50,398.77 258.00,398.85 258.50,398.76 259.00,398.62 259.50,398.56 260.00,398.66 260.50,398.88 261.00,399.08 261.50,399.16 262.00,399.15 262.50,399.12 263.00,399.16 263.50,399.25 264.00,399.32 264.50,399.34 265.00,399.32 265.50,399.35 266.00,399.51 266.50,399.72 267.00,399.87 267.50,399.88 268.00,399.75 268.50,399.63 269.00,399.64 269.50,399.82 270.00,400.07 270.50,400.21 271.00,400.20 271.50,400.09 272.00,400.00 272.50,400.00 273.00,400.07 273.50,400.12 274.00,400.12 274.50,400.09 275.00,400.12 275.50,400.23 276.00,400.36 276.50,400.41 277.00,400.32 277.50,400.15 278.00,400.04 278.50,400.10 279.00,400.29 279.50,400.50 280.00,400.58 280.50,400.50 281.00,400.35 281.50,400.26 282.00,400.30 282.50,400.40 283.00,400.48 283.50,400.49 284.00,400.47 284.50,400.50 285.00,400.59 285.50,400.67 286.00,400.67 286.50,400.56 287.00,400.42 287.50,400.39 288.00,400.52 288.50,400.74 289.00,400.90 289.50,400.90 290.00,400.75 290.50,400.56 291.00,400.49 291.50,400.55 292.00,400.66 292.50,400.73 293.00,400.71 293.50,400.65 294.00,400.62 294.50,400.65 295.00,400.68 295.50,400.63 296.00,400.50 296.50,400.39 297.00,400.40 297.50,400.54 298.00,400.71 298.50,400.78 299.00,400.67 299.50,400.46 300.00,400.29 300.50,400.20 301.00,400.24 301.50,400.30 302.00,400.27 302.50,400.13 303.00,399.95 303.50,399.82 304.00,399.75 304.50,399.68 305.00,399.55 305.50,399.38 306.00,399.24 306.50,399.21 307.00,399.26 307.50,399.30 308.00,399.20 308.50,398.63 309.00,398.01 309.50,397.50 310.00,397.16 310.50,396.93 311.00,396.66 311.50,395.88 312.00,394.98 312.50,394.06 313.00,393.22 313.50,392.45 314.00,392.00 314.50,391.49 315.00,390.94 315.50,390.42 316.00,390.00 316.50,390.13 317.00,390.20 317.50,390.13 318.00,389.96 318.50,389.80 319.00,389.79 319.50,389.94 320.00,390.14 320.50,390.26 321.00,390.21 321.50,390.05 322.00,389.93 322.50,389.91 323.00,389.99 323.50,390.06 324.00,390.07 324.50,390.04 325.00,390.04 325.50,390.10 326.00,390.19 326.50,390.21 327.00,390.10 327.50,389.95 328.00,389.85 328.50,389.92 329.00,390.11 329.50,390.29 330.00,390.33 330.50,390.21 331.00,390.03 331.50,389.92 332.00,389.96 332.50,390.08 333.00,390.18 333.50,390.19 334.00,390.15 334.50,390.13 335.00,390.16 335.50,390.21 336.00,390.20 336.50,390.10 337.00,389.98 337.50,389.96 338.00,390.08 338.50,390.28 339.00,390.40 339.50,390.36 340.00,390.18 340.50,390.00 341.00,389.95 341.50,390.05 342.00,390.21 342.50,390.31 343.00,390.29 343.50,390.22 344.00,390.17 344.50,390.19 345.00,390.23 345.50,390.21 346.00,390.13 346.50,390.07 347.00,390.10 347.50,390.24 348.00,390.40 348.50,390.45 349.00,390.33 349.50,390.13 350.00,390.00 350.50,390.03 351.00,390.19 351.50,390.37 352.00,390.43 352.50,390.36 353.00,390.25 353.50,390.18 354.00,390.21 354.50,390.25 355.00,390.26 355.50,390.21 356.00,390.18 356.50,390.24 357.00,390.37 357.50,390.47 358.00,390.45 358.50,390.29 359.00,390.11 359.50,390.05 360.00,390.16 360.50,390.36 361.00,390.51 361.50,390.50 362.00,390.37 362.50,390.22 363.00,390.17 363.50,390.22 364.00,390.29 364.50,390.32 365.00,390.29 365.50,390.27 366.00,390.85 366.50,391.49 367.00,392.07 367.50,392.54 368.00,392.91 368.50,393.58 369.00,394.40 369.50,395.36 370.00,396.36 370.50,397.25 371.00,397.54 371.50,397.73 372.00,397.96 372.50,398.33 373.00,398.44 373.50,398.55 374.00,398.59 374.50,398.55 375.00,398.53 375.50,398.56 376.00,398.62 376.50,398.63 377.00,398.55 377.50,398.42 378.00,398.36 378.50,398.45 379.00,398.64 379.50,398.80 380.00,398.82 380.50,398.67 381.00,398.48 381.50,398.38 382.00,398.45 382.50,398.60 383.00,398.73 383.50,398.75 384.00,398.68 384.50,398.63 385.00,398.64 385.50,398.68 386.00,398.68 386.50,398.61 387.00,398.53 387.50,398.53 388.00,398.65 388.50,398.83 389.00,398.92 389.50,398.86 390.00,398.67 390.50,398.50 391.00,398.48 391.50,398.62 392.00,398.80 392.50,398.91 393.00,398.87 393.50,398.77 394.00,398.69 394.50,398.70 395.00,398.75 395.50,398.76 396.00,398.72 396.50,398.68 397.00,398.71 397.50,398.84 398.00,398.97 398.50,398.99 399.00,398.87 399.50,398.68 400.00,398.57 400.50,398.63 401.00,398.82 401.50,399.00 402.00,399.05 402.50,398.96 403.00,398.81 403.50,398.74 404.00,398.77 404.50,398.84 405.00,398.89 405.50,398.87 406.00,398.85 406.50,398.88 407.00,398.98 407.50,399.06 408.00,399.02 408.50,398.88 409.00,398.73 409.50,398.70 410.00,398.83 410.50,399.04 411.00,399.18 411.50,399.15 412.00,398.99 412.50,398.83 413.00,398.79 413.50,398.87 414.00,398.99 414.50,399.04 415.00,399.03 415.50,398.99 416.00,399.01 416.50,398.57 417.00,398.10 417.50,397.54 418.00,396.90 418.50,396.30 419.00,395.44 419.50,394.70 420.00,393.99 420.50,393.15 421.00,392.14 421.50,391.36 422.00,390.65 422.50,390.08 423.00,389.64 423.50,389.80 424.00,389.86 424.50,389.83 425.00,389.79 425.50,389.80 426.00,389.86 426.50,389.89 427.00,389.85 427.50,389.77 428.00,389.76 428.50,389.86 429.00,390.05 429.50,390.20 430.00,390.20 430.50,390.06 431.00,389.88 431.50,389.82 432.00,389.93 432.50,390.13 433.00,390.28 433.50,390.31 434.00,390.23 434.50,390.16 435.00,390.16 435.50,390.22 436.00,390.26 436.50,390.25 437.00,390.21 437.50,390.22 438.00,390.33 438.50,390.47 439.00,390.55 439.50,390.47 440.00,390.29 440.50,390.14 441.00,390.15 441.50,390.32 442.00,390.52 442.50,390.62 443.00,390.56 443.50,390.43 444.00,390.33 444.50,390.34 445.00,390.41 445.50,390.47 446.00,390.46 446.50,390.44 447.00,390.46 447.50,390.55 448.00,390.66 448.50,390.66 449.00,390.55 449.50,390.38 450.00,390.31 450.50,390.40 451.00,390.60 451.50,390.78 452.00,390.81 452.50,390.69 453.00,390.52 453.50,390.44 454.00,390.49 454.50,390.61 455.00,390.69 455.50,390.69 456.00,390.66 456.50,390.67 457.00,390.74 457.50,390.80 458.00,390.77 458.50,390.65 458.50,390.53 459.00,394.50 459.50,390.53 459.50,390.53 460.00,390.68 460.50,390.88 461.00,391.00 461.50,390.95 462.00,390.77 462.50,390.61 463.00,390.59 463.50,390.70 464.00,390.85 464.50,390.93 465.00,390.91 465.50,390.86 466.00,390.84 466.50,390.88 467.00,390.92 467.50,390.88 468.00,390.79 468.50,390.73 469.00,390.79 469.50,390.95 470.00,391.12 470.50,391.17 471.00,391.04 471.50,390.85 472.00,390.73 472.50,390.78 473.00,390.95 473.50,391.11 474.00,391.16 474.50,391.49 475.00,391.79 475.50,392.15 476.00,392.58 476.50,393.01 477.00,393.98 477.50,394.92 478.00,395.89 478.50,396.97 479.00,397.61 479.50,398.21 480.00,398.67 480.50,398.99 481.00,398.82 481.50,398.78 482.00,398.92 482.50,399.13 483.00,399.28 483.50,399.27 484.00,399.16 484.50,399.05 485.00,399.03 485.50,399.10 486.00,399.17 486.50,399.18 487.00,399.15 487.50,399.16 488.00,399.25 488.50,399.37 489.00,399.43 489.50,399.35 490.00,399.19 490.50,399.07 491.00,399.12 491.50,399.30 492.00,399.51 492.50,399.60 493.00,399.52 493.50,399.36 494.00,399.26 494.50,399.28 495.00,399.39 495.50,399.49 496.00,399.51 496.50,399.49 496.50,399.49 497.00,396.00 497.50,399.49 497.50,399.57 498.00,399.65 498.50,399.66 499.00,399.58 499.50,399.45 500.00,399.42 500.50,399.54 501.00,399.75 501.50,399.93 502.00,399.94 502.50,399.80 503.00,399.63 503.50,399.57 504.00,399.66 504.50,399.83 505.00,399.94 505.50,399.96 506.00,399.92 506.50,399.91 507.00,399.95 507.50,400.01 508.00,400.01 508.50,399.94 509.00,399.86 509.50,399.89 510.00,400.05 510.50,400.25 511.00,400.35 511.50,400.29 512.00,400.11 512.50,399.97 513.00,399.97 513.50,400.13 514.00,400.32 514.50,400.42 515.00,400.40 515.50,400.32 516.00,400.28 516.50,400.32 517.00,400.38 517.50,400.39 518.00,400.34 518.50,400.32 519.00,400.38 519.50,400.54 520.00,400.69 520.50,400.68 521.00,400.52 521.50,400.31 522.00,400.19 522.50,400.24 523.00,400.41 523.50,400.56 524.00,400.57 524.50,400.45 525.00,400.30 525.50,400.22 526.00,400.24 526.50,400.28 527.00,400.27 527.50,400.22 528.00,400.18 528.50,400.22 529.00,400.32 529.50,400.37 530.00,400.30 530.50,400.11 531.00,399.94 531.50,399.90 532.00,400.02 532.50,400.21 533.00,400.31 533.50,400.25 534.00,400.07 534.50,399.91 535.00,399.86 535.50,399.92 536.00,399.39 536.50,398.79 537.00,398.13 537.50,397.49 538.00,396.28 538.50,395.10 539.00,393.87 539.50,392.53 540.00,391.78 540.50,391.08 541.00,390.53 541.50,390.71 542.00,390.88 542.50,390.92 543.00,390.79 543.00,390.59 543.50,387.50 544.00,390.59 544.00,390.46 544.50,390.47 545.00,390.59 545.50,390.70 546.00,390.71 546.50,390.65 547.00,390.60 547.50,390.61 548.00,390.64 548.50,390.63 549.00,390.54 549.50,390.42 550.00,390.38 550.50,390.47 551.00,390.65 551.50,390.77 552.00,390.72 552.50,390.53 553.00,390.34 553.50,390.26 554.00,390.35 554.50,390.51 555.00,390.62 555.50,390.60 556.00,390.50 556.50,390.42 557.00,390.41 557.50,390.44 558.00,390.43 558.50,390.36 559.00,390.29 559.50,390.29 560.00,390.41 560.50,390.55 561.00,390.59 561.50,390.48 562.00,390.27 562.50,390.12 563.00,390.12 563.50,390.28 564.00,390.45 564.50,390.52 565.00,390.44 565.50,390.30 566.00,390.21 566.50,390.21 567.00,390.26 567.50,390.27 568.00,390.23 568.50,390.18 569.00,390.21 569.50,390.31 570.00,390.40 570.50,390.38 571.00,390.22 571.50,390.03 572.00,389.95 572.50,390.04 573.00,390.23 573.50,390.38 574.00,390.38 574.50,390.23 575.00,390.06 575.50,389.99 576.00,390.03 576.50,390.11 577.00,390.15 577.50,390.12 578.00,390.08 578.50,390.10 579.00,390.17 579.50,390.20 580.00,390.14 580.50,389.98 581.00,389.85 581.50,389.84 582.00,389.98 582.50,390.18 583.00,390.26 583.50,390.18 584.00,389.99 584.50,390.33 585.00,390.81 585.50,391.42 586.00,392.04 586.50,392.59 587.00,393.55 587.50,394.51 588.00,395.51 588.50,396.55 589.00,397.57 589.50,397.54 590.00,397.46 590.50,397.43 591.00,397.54 591.50,397.75 592.00,397.45 592.50,397.01 593.00,396.40 593.50,395.73 594.00,395.16 594.50,394.75 595.00,394.44 595.50,394.12 596.00,394.34 596.50,394.47 597.00,394.59 597.50,394.77 598.00,395.01 598.50,395.07 599.00,395.07 599.50,395.04 600.00,395.07 600.50,395.53 601.00,396.05 601.50,396.50 602.00,396.80 602.50,396.97 603.00,397.15 603.50,397.47 604.00,397.95 604.50,398.50 605.00,398.97 605.50,399.30 606.00,399.54 606.50,399.43 607.00,399.42 607.50,399.47 608.00,399.50 608.50,399.47 609.00,399.43 609.50,399.44 610.00,399.54 610.50,399.66 611.00,399.68 611.50,399.57 612.00,399.38 612.50,399.26 613.00,399.30 613.50,399.49 614.00,399.67 614.50,399.73 615.00,399.63 615.50,399.46 616.00,399.36 616.50,399.38 617.00,399.47 617.50,399.52 618.00,399.51 618.50,399.48 619.00,399.49 619.50,399.57 620.00,399.63 620.50,399.61 621.00,399.48 621.50,399.32 622.00,399.28 622.50,399.39 623.00,399.59 623.50,399.74 624.00,399.71 624.50,399.55 625.00,399.37 625.50,399.31 626.00,399.38 626.50,399.51 627.00,399.58 627.50,399.56 628.00,399.51 628.50,399.50 629.00,399.55 629.50,399.58 630.00,399.53 630.50,399.42 631.00,399.32 631.50,399.34 632.00,399.49 632.50,399.68 633.00,399.75 633.50,399.64 634.00,399.44 634.50,399.29 635.00,399.29 635.50,399.43 636.00,399.58 636.50,399.64 637.00,399.59 637.50,399.51 638.00,399.48 638.50,399.50 639.00,399.53 639.50,398.86 640.00,398.15 640.50,397.48 641.00,396.93 641.50,395.96 642.00,394.96 642.50,393.83 643.00,392.54 643.50,391.92 644.00,391.40 644.50,391.06 645.00,390.82 645.50,390.96 646.00,390.96 646.50,390.85 647.00,390.73 647.50,390.68 648.00,390.71 648.50,390.74 649.00,390.72 649.50,390.66 650.00,390.64 650.50,390.71 651.00,390.83 651.50,390.89 652.00,390.81 652.50,390.62 653.00,390.45 653.50,390.44 654.00,390.58 654.50,390.77 655.00,390.87 655.50,390.80 656.00,390.64 656.50,390.51 657.00,390.48 657.50,390.55 658.00,390.60 658.50,390.60 659.00,390.56 659.50,390.55 660.00,390.60 660.50,390.68 661.00,390.68 661.50,390.57 662.00,390.39 662.50,390.29 663.00,390.35 663.50,390.54 664.00,390.70 664.50,390.73 665.00,390.59 665.50,390.40 666.00,390.29 666.50,390.31 667.00,390.42 667.50,390.50 668.00,390.50 668.50,390.45 669.00,390.42 669.50,390.45 670.00,390.49 670.50,390.46 671.00,390.34 671.50,390.21 672.00,390.18 672.50,390.30 673.00,390.48 673.50,390.59 674.00,390.53 674.50,390.34 675.00,390.15 675.50,390.10 676.00,390.19 676.50,390.34 676.50,390.42 677.00,396.50 677.50,390.42 677.50,390.39 678.00,390.30 678.50,390.25 679.00,390.26 679.50,390.29 680.00,390.25 680.50,390.16 681.00,390.08 681.50,390.11 682.00,390.24 682.50,390.39 683.00,390.43 683.50,390.29 684.00,390.08 684.50,389.94 685.00,389.96 685.50,390.12 686.00,390.28 686.50,390.32 687.00,390.24 687.50,390.12 688.00,390.05 688.50,390.06 689.00,390.10 689.50,390.09 690.00,390.02 690.50,389.99 691.00,390.04 691.50,390.16 692.00,390.25 692.50,390.21 693.00,390.04 693.50,389.85 694.00,389.78 694.50,389.88 695.00,390.07 695.50,390.21 696.00,391.03 696.50,391.73 697.00,392.42 697.50,395.87 698.00,399.42" fill="none" stroke="#404040" stroke-width="1.05" stroke-linejoin="round"/></svg>
</body></html>
